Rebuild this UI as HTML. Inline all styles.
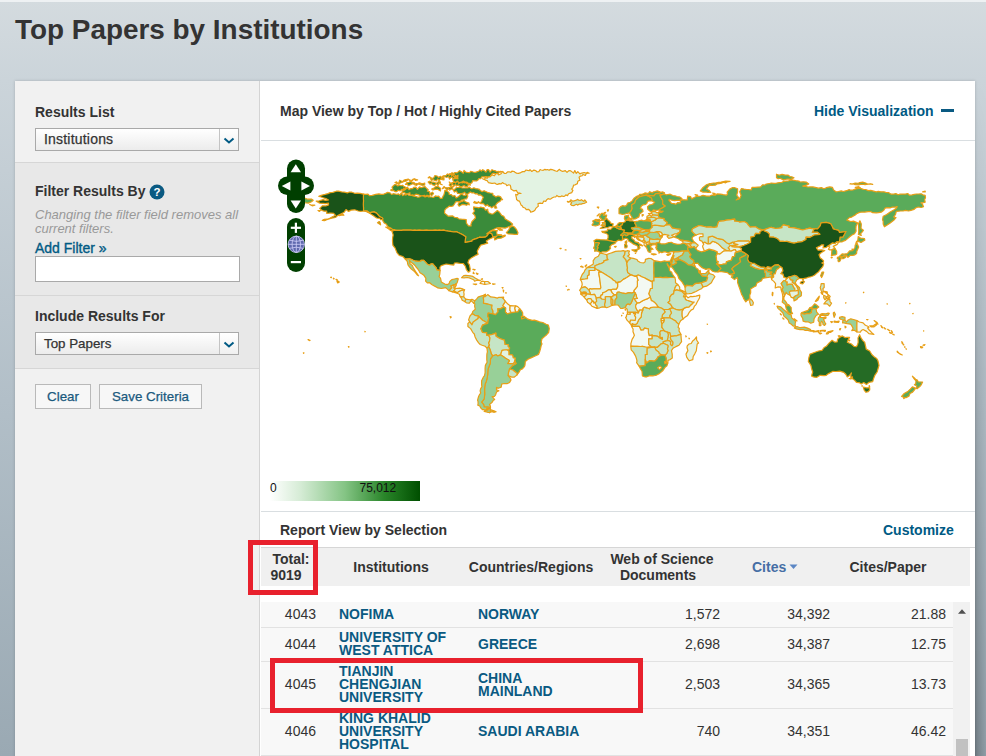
<!DOCTYPE html>
<html><head><meta charset="utf-8">
<style>
*{box-sizing:border-box;margin:0;padding:0}
html,body{width:986px;height:756px;overflow:hidden}
body{font-family:"Liberation Sans",sans-serif;color:#333;background:#cdd5da;position:relative;font-size:14px}
.bg{position:absolute;left:0;top:0;width:986px;height:756px;background:linear-gradient(to bottom,#d4dbdf 0,#cbd4da 80px,#b2bfc8 400px,#9aa9b3 756px)}
.shadow{position:absolute;left:15px;top:81px;width:960px;height:700px;box-shadow:0 0 3px rgba(0,0,0,0.18)}
.rshadow{position:absolute;left:975px;top:81px;width:11px;height:675px;background:linear-gradient(to right,rgba(0,0,0,0.27),rgba(0,0,0,0.07));-webkit-mask-image:linear-gradient(to bottom,rgba(0,0,0,0) 0,rgba(0,0,0,1) 100%);mask-image:linear-gradient(to bottom,rgba(0,0,0,0) 0,rgba(0,0,0,1) 100%)}
.topline{position:absolute;left:0;top:0;width:986px;height:2px;background:#eef1f3}
.abs{position:absolute;white-space:nowrap}
h1{position:absolute;left:15px;top:12.5px;font-size:27.9px;font-weight:bold;color:#333;line-height:34px;white-space:nowrap}
.left{position:absolute;left:15px;top:81px;width:245px;height:675px;background:#f1f1f1;border-right:1px solid #d4d4d4}
.sec2{position:absolute;left:0;top:81px;width:244px;height:207px;background:#e8e8e8;border-top:1px solid #d6d6d6;border-bottom:1px solid #d6d6d6}
.sepl{position:absolute;left:0;width:244px;height:1px;background:#d6d6d6}
.lbl{position:absolute;left:20px;font-weight:bold;font-size:14px;color:#333;white-space:nowrap;line-height:16px}
.sel{position:absolute;left:20px;width:204px;height:23px;border:1px solid #a9a9a9;background:linear-gradient(#fff,#ececec);font-size:13.33px;line-height:21px;padding-left:8px;color:#333;-webkit-text-stroke:0.25px #333}
.sel .arr{position:absolute;right:0;top:0;width:19px;height:21px;border-left:1px solid #c4c4c4;background:linear-gradient(#fff,#f0f0f0)}
.main{position:absolute;left:260px;top:81px;width:715px;height:675px;background:#fff;border-left:1px solid #fff}
.hline{position:absolute;left:0;width:714px;height:1px;background:#d9dee1}
.b{font-weight:bold}
.blue{color:#005a84}
.btn{position:absolute;top:303px;height:25px;border:1px solid #b9b9b9;background:#f7f7f7;color:#1b5a7e;font-size:13.33px;line-height:23px;text-align:center;-webkit-text-stroke:0.25px #1b5a7e}
.th{position:absolute;font-weight:bold;font-size:14px;line-height:16px;text-align:center;white-space:nowrap;color:#333}
.row{position:absolute;left:0;width:692px;background:#f8f8f8;border-bottom:1px solid #e2e2e2}
.c{position:absolute;white-space:nowrap;font-size:14px;line-height:13px}
.lnk{font-weight:bold;color:#0a5a82}
.num{text-align:right;color:#333;font-size:14px}
.red{position:absolute;border:5px solid #e8212d}
</style></head><body>
<div class="bg"></div><div class="topline"></div>
<div class="shadow"></div><div class="rshadow"></div>
<h1>Top Papers by Institutions</h1>
<div class="left">
  <div class="lbl" style="top:23px">Results List</div>
  <div class="sel" style="top:47px;font-size:14px;letter-spacing:0.2px">Institutions<div class="arr"><svg width="18" height="21" viewBox="0 0 18 21"><path d="M4.5 9.5 L9 13.5 L13.5 9.5" fill="none" stroke="#005a84" stroke-width="2"/></svg></div></div>
  <div class="sec2">
    <div class="lbl" style="top:20px">Filter Results By</div>
    <svg class="abs" style="left:134px;top:21px" width="16" height="16" viewBox="0 0 16 16"><circle cx="8" cy="8" r="7.5" fill="#0a5a82"/><text x="8" y="12" font-family="Liberation Sans" font-size="11.5" font-weight="bold" fill="#fff" text-anchor="middle">?</text></svg>
    <div class="abs" style="left:20px;top:45px;font-style:italic;font-size:13px;line-height:14px;color:#999;white-space:normal;width:215px">Changing the filter field removes all current filters.</div>
    <div class="abs blue" style="left:20px;top:77px;font-size:14px;line-height:16px;-webkit-text-stroke:0.35px #005a84">Add Filter »</div>
    <div class="abs" style="left:20px;top:93px;width:205px;height:26px;background:#fff;border:1px solid #a9a9a9"></div>
    <div class="sepl" style="top:132px"></div>
    <div class="lbl" style="top:145px">Include Results For</div>
    <div class="sel" style="top:169px">Top Papers<div class="arr"><svg width="18" height="21" viewBox="0 0 18 21"><path d="M4.5 9.5 L9 13.5 L13.5 9.5" fill="none" stroke="#005a84" stroke-width="2"/></svg></div></div>
  </div>
  <div class="btn" style="left:20px;width:56px">Clear</div>
  <div class="btn" style="left:84px;width:103px">Save Criteria</div>
</div>
<div class="main">
  <div class="abs b" style="left:19px;top:22px;font-size:14px;line-height:16px">Map View by Top / Hot / Highly Cited Papers</div>
  <div class="abs b blue" style="left:553px;top:22px;font-size:14px;line-height:16px">Hide Visualization</div>
  <div class="abs" style="left:680px;top:27.5px;width:13px;height:3.5px;background:#0a5a82"></div>
  <div class="hline" style="top:59px"></div>
  <svg class="abs" style="left:0;top:60px" width="713" height="370" viewBox="0 0 713 370"><g stroke="#e89f16" stroke-width="1.2" stroke-linejoin="round">
<path d="M102.5,53.2 104.7,53.3 107.0,53.2 108.4,54.6 111.2,54.4 114.7,53.4 117.9,52.9 120.2,53.4 122.5,53.3 125.2,52.1 126.8,51.3 129.3,52.0 130.5,53.5 132.2,52.7 134.2,53.0 135.9,53.4 137.5,52.9 138.8,54.1 140.3,51.8 141.6,54.6 143.7,53.4 145.0,54.1 146.6,53.1 148.0,54.4 150.3,54.1 151.4,54.7 153.2,55.2 155.5,55.5 156.7,56.2 158.5,55.9 160.2,55.0 162.1,54.7 164.1,56.0 165.5,55.5 166.9,54.6 168.5,55.8 170.7,56.0 172.5,56.5 174.4,54.9 176.0,55.4 177.7,55.1 179.4,57.3 181.2,57.2 182.1,55.1 183.0,53.6 183.2,52.6 183.7,50.7 183.8,49.4 186.3,50.2 188.0,51.4 188.2,53.4 190.4,53.6 191.7,55.1 193.8,54.5 195.2,56.9 196.8,56.0 198.2,55.0 199.6,53.4 200.7,52.7 202.3,54.1 204.3,54.4 205.7,53.0 206.9,55.1 205.7,57.8 203.8,58.0 201.7,58.9 200.5,59.0 199.3,60.7 197.0,60.7 194.7,60.8 193.5,63.0 192.1,64.9 190.1,65.5 188.2,65.1 186.4,66.8 185.4,67.1 183.8,69.1 183.5,72.1 185.6,73.8 187.3,75.2 191.7,74.9 193.5,76.3 196.4,76.7 197.9,77.9 200.5,78.2 202.9,78.3 205.2,78.6 205.4,82.2 207.5,84.9 210.1,84.9 209.9,83.2 211.0,80.5 213.1,78.3 214.5,77.0 213.9,74.4 211.8,72.3 213.6,70.0 212.5,67.9 212.7,65.8 214.7,66.3 215.9,66.4 217.9,66.8 219.7,66.0 221.4,66.6 222.9,66.5 224.5,69.1 226.7,68.2 226.9,70.0 227.6,71.8 230.3,72.9 232.0,73.0 234.6,70.9 236.3,69.5 238.3,71.0 240.7,74.4 242.8,75.3 244.2,77.9 246.8,79.6 248.6,80.5 251.7,83.1 249.5,85.1 247.6,85.8 244.2,87.1 241.1,86.8 238.0,86.6 235.5,87.0 232.0,88.7 228.5,90.6 225.8,92.8 227.6,91.7 230.3,90.2 232.0,89.4 236.3,89.6 235.5,91.4 236.3,94.1 238.6,93.9 241.6,94.9 244.2,94.1 244.2,94.9 242.5,95.9 239.9,97.2 237.2,97.3 233.7,98.9 233.4,97.1 235.8,95.2 232.0,96.1 230.6,92.6 228.1,92.0 226.2,94.7 224.1,96.2 220.5,96.3 218.5,96.2 215.3,97.6 212.9,98.4 211.0,99.2 211.0,100.1 209.3,100.4 206.0,101.1 204.0,101.5 204.3,98.8 204.8,95.7 201.3,93.6 199.7,92.7 197.1,91.5 195.2,90.6 192.6,91.0 189.4,90.4 187.3,90.1 184.5,89.6 182.7,89.2 180.1,89.3 178.4,89.1 176.5,89.3 174.3,89.2 171.8,89.3 169.7,89.3 167.5,89.3 165.4,89.2 162.4,89.3 160.9,89.3 158.3,89.2 155.5,89.4 153.8,89.2 151.9,89.3 149.7,89.2 147.4,89.2 144.7,89.2 142.3,89.2 140.3,89.3 138.7,89.3 136.1,89.3 134.0,89.2 133.6,88.7 131.4,88.3 129.7,87.1 127.0,85.8 125.2,83.1 123.2,81.9 121.7,79.6 121.7,77.2 118.2,75.2 115.6,72.1 113.0,70.9 110.2,71.4 108.6,71.8 106.0,70.0 102.5,69.5 102.5,66.8 102.4,65.2 102.3,63.2 102.5,59.9 102.4,57.5 102.4,55.7ZM124.7,86.1 128.3,87.3 130.5,87.5 133.2,90.3 129.6,89.4 127.8,88.1ZM245.4,91.7 247.3,92.9 251.2,93.1 253.8,93.3 256.5,93.4 257.0,91.7 255.6,88.7 253.4,86.0 251.6,84.9 248.9,86.6 247.7,88.9ZM235.8,66.9 234.0,67.2 233.2,64.9 230.7,66.8 229.3,65.6 228.1,65.5 226.2,63.8 224.7,65.1 223.2,63.4 222.1,62.4 219.9,62.6 218.8,62.1 217.5,60.7 215.9,62.5 214.4,62.1 212.7,61.6 213.6,60.4 215.3,61.4 217.2,61.4 219.0,61.9 220.6,60.4 221.5,57.8 222.3,56.4 221.0,54.9 219.3,53.8 217.5,54.1 216.1,52.7 214.5,52.9 212.7,51.7 211.0,52.0 209.4,50.9 207.7,52.2 206.8,53.0 204.9,53.6 203.7,51.2 202.4,52.2 200.5,52.5 198.3,52.5 196.6,52.4 195.3,50.0 193.5,51.1 192.1,49.0 193.8,48.3 194.4,47.2 195.9,46.5 197.7,46.3 199.6,45.8 201.2,47.0 203.6,47.0 204.9,47.0 206.9,46.9 208.3,46.0 209.7,47.3 210.9,47.8 212.9,46.8 214.5,47.6 216.5,47.8 218.5,48.4 219.3,49.6 220.9,50.6 223.2,49.7 224.3,50.4 225.8,51.0 227.2,51.7 229.3,52.0 231.8,52.3 232.0,54.2 233.6,54.9 235.0,56.0 236.5,55.1 238.2,55.2 239.6,55.9 240.7,57.8 241.6,58.6 240.0,58.8 239.0,60.4 237.2,61.2 235.3,63.0 234.6,64.4ZM141.0,49.9 141.7,52.0 143.6,51.5 144.5,52.7 146.5,52.8 148.9,51.7 149.1,54.3 151.5,53.9 152.9,54.4 154.9,53.2 156.9,53.6 158.5,54.2 160.2,54.8 161.6,54.9 163.5,54.3 164.7,55.4 166.0,54.2 167.3,56.0 169.4,53.3 170.7,54.6 172.5,52.5 171.5,51.2 169.0,52.8 168.4,50.5 166.3,50.2 167.2,48.8 165.5,47.2 164.1,45.7 161.5,46.2 160.2,46.7 158.5,45.9 156.4,48.4 154.9,46.2 152.9,46.3 151.5,47.6 150.0,47.5 148.0,48.6 146.4,46.2 144.4,48.5 142.7,47.2 142.7,48.9ZM129.6,49.0 130.7,49.7 132.7,49.6 134.0,50.6 135.7,50.6 137.5,49.3 139.2,49.9 141.0,48.3 142.8,49.9 144.7,47.2 146.2,47.2 144.6,46.3 142.7,45.2 141.5,44.2 140.1,44.8 138.5,44.0 136.8,45.0 135.1,43.6 133.6,43.6 132.2,45.0 131.0,46.2 131.8,48.1ZM211.0,41.7 209.3,42.7 207.9,42.5 205.9,42.7 204.2,40.9 203.2,40.8 201.9,41.8 199.5,41.5 197.7,42.6 196.9,40.1 194.6,41.8 193.5,41.1 192.3,40.0 191.7,38.5 192.9,37.9 193.6,36.3 196.6,37.0 197.0,35.0 195.1,35.8 192.6,35.4 191.8,34.1 190.4,32.5 188.2,32.9 189.9,33.3 191.0,31.7 193.0,32.6 193.9,31.5 196.0,31.9 197.5,30.6 198.6,29.7 200.5,30.8 202.3,32.2 203.0,29.4 204.6,31.0 206.4,31.3 208.5,31.6 209.9,30.3 211.0,30.7 212.3,31.0 214.3,31.4 215.2,31.1 217.6,30.3 218.9,28.8 220.4,30.1 221.7,28.7 223.2,29.6 224.9,31.1 226.2,28.6 227.7,28.7 229.1,31.2 231.0,28.7 232.3,29.3 234.4,29.8 236.1,31.0 237.2,30.3 239.2,31.2 240.7,30.6 239.0,30.3 237.2,32.4 235.9,34.0 233.1,32.2 231.3,32.6 230.2,34.1 229.1,35.7 227.4,36.2 224.9,35.6 223.2,35.9 220.7,35.9 219.9,37.6 218.0,37.6 217.2,38.7 215.8,39.9 213.2,39.8 211.7,39.6ZM209.2,44.3 207.6,43.0 206.6,45.5 204.2,45.6 203.5,44.6 201.4,45.3 200.5,45.7 199.0,45.2 197.0,44.1 195.3,45.1 194.6,43.2 192.8,45.5 191.5,42.7 189.7,45.6 188.2,44.1 189.2,42.1 188.2,41.0 189.9,42.4 191.3,41.6 192.8,41.5 194.5,41.5 196.0,40.2 197.5,41.7 198.9,41.6 200.5,41.1 202.6,40.1 203.7,42.0 205.6,41.0 207.1,42.0 209.2,42.5ZM197.0,38.0 195.6,37.4 193.4,37.7 191.9,37.5 190.5,35.9 188.5,38.0 187.7,35.7 185.7,36.3 184.6,36.0 183.1,35.5 181.2,35.9 182.1,34.9 184.0,34.6 185.3,34.2 186.5,32.9 188.2,34.2 189.8,32.7 190.6,34.6 192.6,33.1 193.7,33.9 195.5,35.3 197.0,34.1 196.7,36.1ZM163.7,44.1 161.9,44.2 161.0,44.3 159.1,43.6 156.9,42.9 155.7,44.3 154.0,43.9 152.2,42.7 150.5,43.2 149.7,43.7 147.2,44.7 146.4,43.1 144.5,43.4 145.9,41.6 148.0,41.3 149.3,40.8 150.7,41.1 153.1,41.6 154.5,42.9 155.6,42.5 157.1,42.4 158.5,41.9 160.4,42.6 161.6,42.7 163.7,42.0ZM191.7,48.1 189.9,48.0 188.6,49.2 187.6,47.6 186.0,49.4 183.9,46.5 182.4,47.3 181.2,47.8 183.0,45.5 184.3,46.6 186.8,46.8 187.8,46.6 189.8,46.3 191.7,45.5ZM179.5,49.9 177.4,48.7 176.6,48.2 173.8,48.4 171.9,48.9 170.7,48.1 173.0,47.0 174.2,45.8 176.6,45.3 177.7,45.9 179.5,47.2ZM208.3,63.9 207.0,63.2 205.5,64.3 203.5,63.6 201.9,63.4 200.3,63.9 198.1,65.2 197.0,63.7 197.7,62.1 199.2,61.2 199.6,60.0 200.8,60.7 203.0,59.4 204.5,60.7 205.7,61.2 207.9,62.1ZM181.2,43.8 179.5,43.1 178.1,42.1 177.0,44.4 175.3,42.7 173.8,44.3 171.7,43.9 170.2,42.4 169.0,43.2 167.2,41.0 168.5,40.2 170.7,40.9 171.8,41.2 173.1,41.2 175.3,42.2 176.1,41.7 178.0,40.3 179.5,41.1 179.1,42.9ZM156.7,38.8 155.3,38.6 153.3,37.8 152.0,38.2 150.6,40.2 149.1,39.3 147.3,38.2 146.2,39.4 144.9,40.1 143.0,40.4 140.8,41.5 139.2,42.0 137.1,43.3 135.6,40.8 134.0,41.5 135.8,42.5 137.9,41.8 138.7,39.2 141.6,40.7 142.7,39.4 144.5,38.6 145.2,38.5 147.2,38.0 148.5,39.7 150.0,39.3 151.6,39.3 153.2,37.6 154.4,39.3ZM183.0,38.8 181.3,38.6 179.7,37.9 178.1,39.9 176.7,38.0 175.4,40.0 173.8,39.5 172.5,38.7 170.2,39.3 169.1,36.4 167.2,36.8 168.5,35.7 171.2,37.5 172.8,36.7 173.9,34.5 176.0,35.0 177.5,36.4 179.6,35.3 180.8,37.1 183.0,36.8ZM241.6,89.1 238.8,89.2 236.5,87.7 239.8,88.2ZM118.2,80.5 116.5,81.7 119.6,83.8 119.1,81.4ZM236.7,93.6 240.7,93.8 239.0,94.5Z" fill="#3a8b3a"/>
<path d="M131.0,90.3 132.2,94.0 131.6,96.8 131.5,99.8 131.6,101.5 131.9,104.3 134.0,106.9 134.8,108.9 135.9,111.6 138.2,114.4 141.8,115.5 144.3,118.1 148.5,117.8 150.1,118.3 152.2,119.3 155.0,120.2 157.1,120.3 159.9,120.2 159.9,119.4 162.8,119.4 164.9,121.6 166.3,123.2 168.6,124.2 170.0,122.9 171.8,122.9 173.0,124.3 175.1,126.7 175.8,128.8 179.1,129.7 178.9,126.4 180.2,124.6 183.0,123.7 185.1,123.0 189.1,123.7 192.8,124.1 193.5,122.0 195.9,121.9 199.6,122.5 202.2,122.5 204.3,125.1 205.4,128.6 207.3,131.1 208.9,130.4 209.2,127.8 208.4,123.8 206.9,121.6 207.8,119.0 211.0,116.4 214.5,114.4 217.1,113.4 216.2,110.2 217.6,107.6 219.7,104.1 223.2,103.2 226.7,102.2 225.3,100.1 228.5,98.0 232.0,96.4 232.0,96.1 230.6,92.6 228.1,92.0 226.2,94.7 224.1,96.2 220.5,96.3 218.5,96.2 215.3,97.6 212.9,98.4 211.0,99.2 211.0,100.1 209.3,100.4 206.0,101.1 204.0,101.5 204.3,98.8 204.8,95.7 201.3,93.6 199.7,92.7 197.1,91.5 195.2,90.6 192.6,91.0 189.4,90.4 187.3,90.1 184.5,89.6 182.7,89.2 180.1,89.3 178.4,89.1 176.5,89.3 174.3,89.2 171.8,89.3 169.7,89.3 167.5,89.3 165.4,89.2 162.4,89.3 160.9,89.3 158.3,89.2 155.5,89.4 153.8,89.2 151.9,89.3 149.7,89.2 147.4,89.2 144.7,89.2 142.3,89.2 140.3,89.3 138.7,89.3 136.1,89.3 134.0,89.2ZM102.5,53.2 99.1,52.3 96.3,52.1 93.7,52.3 90.9,51.2 88.4,51.0 86.5,51.9 83.2,51.1 80.7,50.9 77.5,50.2 75.3,50.2 71.8,51.4 69.2,51.6 67.0,52.6 64.0,53.4 60.2,54.3 57.8,55.3 59.5,55.7 62.2,56.7 65.7,57.9 67.5,59.0 64.5,59.4 62.2,58.6 59.7,59.3 58.3,59.9 55.2,60.2 58.7,62.1 62.2,62.4 64.3,62.7 67.5,62.1 67.5,63.9 64.8,64.9 61.3,64.8 58.7,67.4 60.5,69.1 63.1,70.2 65.7,70.2 65.7,72.3 68.0,72.2 69.9,72.0 72.7,72.4 74.5,74.4 71.5,75.7 69.2,77.0 66.7,78.2 63.1,78.4 61.3,79.4 63.5,79.7 65.7,78.8 68.8,77.6 71.8,77.0 74.5,76.5 76.2,74.9 79.7,73.0 83.2,71.2 85.0,68.6 87.6,70.4 90.2,69.1 93.7,68.8 97.2,70.0 99.7,70.3 102.5,70.0 105.1,70.5 108.6,72.3 112.1,74.4 115.6,77.0 118.5,77.3 120.0,78.8 121.7,78.2 121.7,77.2 118.2,75.2 115.6,72.1 113.0,70.9 110.2,71.4 108.6,71.8 106.0,70.0 102.5,69.5 102.5,66.8 102.4,65.2 102.3,63.2 102.5,59.9 102.4,57.5 102.4,55.7ZM78.3,74.7 81.0,73.9 82.9,74.2 81.5,73.0ZM48.7,63.5 50.8,64.2 53.8,64.2 51.2,64.8ZM57.0,69.6 59.4,69.5 58.4,70.4ZM76.2,139.6 78.3,140.9 76.7,141.9 76.0,140.5ZM72.4,137.2 73.2,137.7 72.5,137.8ZM75.0,138.4 76.2,138.6 75.5,138.9ZM69.6,136.3 70.4,136.1 70.3,136.7Z" fill="#1a5319"/>
<path d="M144.3,118.1 148.5,117.8 150.1,118.3 152.2,119.3 155.0,120.2 157.1,120.3 159.9,120.2 159.9,119.4 162.8,119.4 164.9,121.6 166.3,123.2 168.6,124.2 170.0,122.9 171.8,122.9 173.0,124.3 175.1,126.7 175.8,128.8 179.1,129.7 178.8,133.1 178.1,135.6 179.5,137.2 180.3,140.9 183.8,143.1 186.5,143.6 188.2,142.4 188.8,140.4 190.8,138.6 193.5,138.0 196.1,137.4 197.3,137.9 196.1,141.8 194.9,143.7 193.1,143.9 190.0,144.9 190.8,146.8 187.9,149.6 184.7,146.6 182.1,147.1 180.3,147.5 176.8,146.9 174.6,145.6 170.7,143.5 168.7,141.7 166.3,141.8 164.6,140.0 164.9,137.4 162.8,134.2 161.1,133.1 159.0,131.7 157.8,129.5 156.7,127.8 155.0,126.0 154.0,124.5 151.8,122.5 150.3,121.5 148.5,119.5 148.8,122.5 151.4,124.6 152.3,126.9 153.4,128.6 155.0,131.2 157.6,134.8 156.2,133.9 154.4,131.6 153.2,130.4 150.4,128.1 148.8,126.4 147.1,124.1 146.6,122.5 146.4,120.5Z" fill="#98d098"/>
<path d="M187.9,149.6 190.8,146.8 190.0,144.9 193.1,143.9 193.1,147.2 194.7,147.5 192.9,149.8 191.5,150.9Z" fill="#c6e5c6"/>
<path d="M193.1,143.9 194.9,143.7 194.7,142.6 195.2,144.4 193.6,147.2 193.1,147.2Z" fill="#e3f3e3"/>
<path d="M194.7,147.5 198.7,147.2 200.8,147.6 203.6,148.8 200.8,149.3 197.3,150.9 196.2,152.2 195.6,151.6 192.9,149.8Z" fill="#e3f3e3"/>
<path d="M191.5,150.9 192.9,149.8 195.6,151.6 195.2,151.9Z" fill="#e3f3e3"/>
<path d="M203.6,148.8 202.7,151.0 203.1,153.1 202.7,155.9 199.2,155.6 198.3,153.3 196.2,152.2 197.3,150.9 200.8,149.3Z" fill="#e3f3e3"/>
<path d="M202.7,155.9 204.7,158.2 204.1,160.8 201.2,159.3 200.5,157.5 199.2,155.6Z" fill="#c6e5c6"/>
<path d="M204.7,158.2 207.5,158.5 209.2,158.9 211.0,158.4 213.8,159.8 212.9,162.4 210.1,159.6 208.3,162.2 205.5,161.9 204.1,160.8Z" fill="#c6e5c6"/>
<path d="M200.6,136.7 202.7,134.6 204.8,134.4 209.2,134.8 211.9,135.4 214.5,137.2 217.3,138.7 219.4,139.6 215.9,139.2 213.6,140.2 212.7,138.8 209.0,137.2 206.6,136.5 203.0,136.8Z" fill="#c6e5c6"/>
<path d="M219.0,142.4 220.8,140.2 223.7,140.5 223.7,143.5 221.8,143.0Z" fill="#f3f9f3"/>
<path d="M223.7,140.5 226.9,140.5 229.5,142.4 226.7,143.0 223.7,143.5Z" fill="#e3f3e3"/>
<path d="M212.2,143.0 215.7,143.1 214.6,143.7Z" fill="#e3f3e3"/>
<path d="M231.6,142.8 234.2,143.0 232.0,143.5Z" fill="#c6e5c6"/>
<path d="M211.8,128.3 214.1,128.6 213.1,129.1ZM212.4,131.2 213.2,132.6 212.2,132.5ZM215.3,132.1 217.1,132.8 216.2,133.4ZM220.2,138.1 221.5,137.7 221.1,138.4Z" fill="#f3f9f3"/>
<path d="M240.9,156.3 242.6,156.1 242.5,157.3 240.9,157.3Z" fill="#e3f3e3"/>
<path d="M241.1,146.5 242.1,146.5 241.6,147.2ZM242.1,149.1 242.8,149.3 242.5,149.8ZM242.3,150.7 242.6,150.5 242.6,151.0ZM244.7,151.7 245.3,151.9 244.9,152.2Z" fill="#f3f9f3"/>
<path d="M213.8,159.8 215.7,157.9 217.1,156.1 218.3,155.6 222.3,154.4 224.4,153.3 223.4,154.7 222.3,156.6 222.7,159.1 222.5,162.1 226.5,162.8 228.5,163.5 231.1,164.1 230.6,167.1 232.0,170.1 232.0,172.9 229.7,172.5 227.1,172.0 226.7,175.4 227.8,176.9 227.2,179.4 226.7,182.4 225.5,181.6 223.9,180.6 221.6,179.2 219.6,177.3 217.4,175.2 213.8,174.3 211.1,172.6 211.8,170.4 214.3,168.2 213.6,165.2 213.9,162.8 212.9,162.4Z" fill="#98d098"/>
<path d="M224.4,153.3 223.9,155.9 226.7,153.6 229.7,155.9 233.7,156.4 236.3,157.1 237.9,156.3 240.7,156.3 242.5,157.9 244.2,160.1 244.2,161.0 243.1,162.6 241.8,164.7 243.0,165.9 239.3,167.8 236.7,167.8 237.2,170.6 234.6,173.6 232.0,172.9 232.0,170.1 230.6,167.1 231.1,164.1 228.5,163.5 226.5,162.8 222.5,162.1 222.7,159.1 222.3,156.6 223.4,154.7Z" fill="#c6e5c6"/>
<path d="M244.2,160.1 246.8,163.1 249.1,164.7 248.9,169.1 250.3,171.7 246.3,172.9 244.4,171.0 244.6,167.1 243.0,165.9 241.8,164.7 243.1,162.6 244.2,161.0Z" fill="#f3f9f3"/>
<path d="M249.1,164.7 252.7,164.9 254.7,164.9 253.8,167.1 254.7,171.0 252.8,171.3 250.3,171.7 248.9,169.1Z" fill="#f3f9f3"/>
<path d="M254.7,164.9 256.7,165.6 258.7,167.6 256.8,171.0 254.7,171.0 253.8,167.1Z" fill="#f3f9f3"/>
<path d="M211.1,172.6 213.8,174.3 217.4,175.2 217.1,177.6 214.0,179.8 212.2,180.9 211.0,183.8 208.7,180.9 207.6,178.9 209.0,175.0Z" fill="#c6e5c6"/>
<path d="M208.7,180.9 211.0,183.8 212.2,180.9 214.0,179.8 217.1,177.6 217.4,175.2 219.6,177.3 221.6,179.2 223.9,180.6 225.5,181.6 226.7,182.4 224.1,183.1 221.6,184.1 219.9,187.8 221.6,191.4 225.7,191.6 225.7,194.2 227.6,194.2 229.0,196.9 228.5,200.4 227.6,202.1 228.5,203.9 227.6,205.6 226.0,207.1 224.1,205.3 221.2,204.3 219.2,203.5 217.6,201.8 215.7,199.1 214.1,196.0 213.3,193.0 211.7,191.3 209.6,187.6 206.9,185.5 206.9,182.5Z" fill="#c6e5c6"/>
<path d="M258.7,167.6 260.6,169.9 261.7,171.9 261.7,175.0 264.3,176.2 266.9,178.2 268.5,178.6 271.3,179.4 273.4,179.2 276.6,180.1 278.4,180.8 281.8,181.5 285.1,183.3 287.4,184.1 288.3,187.6 287.6,191.6 285.7,193.7 284.1,195.1 281.0,197.8 280.2,201.0 281.0,203.0 280.2,204.6 279.6,207.4 278.7,210.5 277.5,213.5 273.6,215.2 270.5,216.6 267.0,218.2 264.3,220.5 264.0,224.0 263.4,225.7 261.4,227.9 259.4,228.6 257.9,231.4 255.8,234.1 256.1,232.2 253.7,230.5 251.9,229.0 248.4,227.9 251.4,224.7 255.1,222.5 253.7,219.8 254.2,217.0 252.2,217.0 251.6,214.0 247.9,213.7 247.9,210.4 247.4,209.6 248.6,206.9 247.0,205.3 247.2,203.5 243.9,203.5 243.7,201.6 243.3,199.1 239.3,197.8 236.6,196.2 234.8,195.1 234.9,192.1 232.8,192.9 230.2,193.7 227.6,194.2 225.7,194.2 225.7,191.6 221.6,191.4 219.9,187.8 221.6,184.1 224.1,183.1 226.7,182.4 227.2,179.4 227.8,176.9 226.7,175.4 227.1,172.0 229.7,172.5 232.0,172.9 234.6,173.6 237.2,170.6 236.7,167.8 239.3,167.8 243.0,165.9 244.6,167.1 244.4,171.0 246.3,172.9 250.3,171.7 252.8,171.3 254.7,171.0 256.8,171.0ZM260.3,175.4 263.5,175.4 264.2,176.8 260.8,178.0Z" fill="#5aab5a"/>
<path d="M227.6,194.2 230.2,193.7 232.8,192.9 234.9,192.1 234.8,195.1 236.6,196.2 239.3,197.8 243.3,199.1 243.7,201.6 243.9,203.5 247.2,203.5 247.0,205.3 248.6,206.9 247.4,209.6 245.8,208.8 243.6,209.0 241.1,209.3 240.3,211.6 239.7,213.9 236.7,214.9 235.1,213.7 231.6,214.9 230.2,212.6 229.3,209.1 227.6,205.6 228.5,203.9 227.6,202.1 228.5,200.4 229.0,196.9Z" fill="#c6e5c6"/>
<path d="M239.7,213.9 240.3,211.6 241.1,209.3 243.6,209.0 245.8,208.8 247.4,209.6 247.9,210.4 247.9,213.7 251.6,214.0 252.2,217.0 254.2,217.0 253.7,219.8 253.3,221.7 251.4,222.9 248.9,222.7 246.7,222.6 248.4,219.6 245.9,218.1 244.2,217.0 242.2,215.5Z" fill="#e3f3e3"/>
<path d="M248.4,227.9 251.9,229.0 253.7,230.5 256.1,232.2 255.8,234.1 253.1,236.2 250.9,236.1 247.0,234.5 247.4,231.9Z" fill="#c6e5c6"/>
<path d="M231.6,214.9 235.1,213.7 236.7,214.9 239.7,213.9 242.2,215.5 244.2,217.0 245.9,218.1 248.4,219.6 246.7,222.6 248.9,222.7 251.4,222.9 253.3,221.7 253.7,219.8 255.1,222.5 251.4,224.7 248.4,227.9 247.4,231.9 247.0,234.5 249.1,236.8 250.0,238.9 248.6,241.5 246.0,242.7 243.1,242.5 240.7,243.1 240.2,246.1 237.3,247.3 235.5,246.4 235.5,248.9 237.9,249.7 235.5,251.1 234.6,253.8 233.4,255.5 231.1,255.5 232.7,257.4 233.7,258.6 232.1,259.6 230.9,261.6 228.5,263.4 229.4,265.1 229.5,266.5 226.7,266.2 223.2,266.0 222.7,263.7 220.6,261.1 223.2,257.8 223.5,255.0 223.7,253.4 223.6,251.4 223.6,248.5 223.7,246.3 224.1,243.2 225.2,240.5 225.8,238.5 226.3,235.9 226.7,233.3 226.8,230.7 227.1,227.9 228.5,224.3 229.3,222.2 229.5,217.9ZM229.2,267.2 230.0,268.9 232.2,269.6 233.0,269.9 235.1,270.7 232.8,271.3 231.1,270.6 229.2,271.1Z" fill="#98d098"/>
<path d="M226.0,207.1 227.6,205.6 229.3,209.1 230.2,212.6 231.6,214.9 229.5,217.9 229.3,222.2 228.5,224.3 227.1,227.9 226.8,230.7 226.7,233.3 226.3,235.9 225.8,238.5 225.2,240.5 224.1,243.2 223.7,246.3 223.6,248.5 223.6,251.4 223.7,253.4 223.5,255.0 223.2,257.8 220.6,261.1 222.7,263.7 223.2,266.0 226.7,266.2 229.5,266.5 228.1,266.8 227.0,269.1 225.0,269.1 222.6,268.6 221.4,268.6 219.7,266.9 218.8,265.0 216.8,264.2 217.1,262.5 217.0,260.4 216.6,259.2 217.1,257.2 217.7,255.3 218.7,253.3 219.7,252.0 219.1,249.8 219.7,247.6 221.0,245.5 220.6,244.1 220.6,239.8 222.3,236.2 223.4,234.8 224.1,231.9 224.1,227.5 224.3,224.7 225.0,223.1 226.1,221.4 225.8,218.8 225.8,215.2 225.9,213.0 226.4,210.9ZM229.2,267.2 227.3,268.1 225.8,267.4 225.0,269.5 223.2,270.4 225.3,270.9 227.1,271.3 228.5,271.8 229.2,271.1Z" fill="#98d098"/>
<path d="M189.1,175.5 190.3,176.1 189.6,176.8Z" fill="#f3f9f3"/>
<path d="M221.5,37.8 223.8,38.5 224.0,36.4 226.0,37.3 227.3,35.9 229.0,35.8 230.2,34.7 231.1,33.9 233.5,34.8 234.8,32.6 236.4,32.4 237.6,33.9 239.7,33.0 240.7,31.8 241.7,30.4 243.4,32.5 245.1,32.3 246.8,30.8 248.2,30.8 249.9,31.4 250.9,30.1 253.1,30.5 254.0,31.3 255.5,32.1 257.4,32.4 259.2,31.9 260.6,31.1 261.7,30.6 263.6,30.7 264.8,29.0 266.6,29.4 268.3,29.6 269.0,28.7 270.8,30.5 272.9,29.1 274.6,29.5 275.9,30.9 277.8,30.7 279.1,28.5 280.1,29.0 282.2,29.3 283.9,28.4 285.0,28.9 286.4,28.5 288.1,29.3 289.5,28.3 291.5,28.7 293.2,29.4 294.7,30.0 296.2,30.3 298.5,28.3 299.2,29.2 301.1,30.3 302.9,30.2 304.1,29.5 306.0,31.4 307.7,29.8 308.9,29.6 310.7,30.6 312.6,32.1 313.8,29.6 315.3,32.4 316.8,30.6 318.9,32.9 319.7,32.4 322.0,31.8 323.2,31.5 325.5,32.3 326.8,32.2 328.2,32.2 326.2,31.4 325.3,32.5 324.3,34.4 321.9,33.5 320.9,35.0 319.5,35.0 318.1,36.3 318.9,39.1 316.8,40.2 316.4,42.6 314.2,43.8 312.6,44.2 311.8,46.8 310.7,48.1 311.9,49.5 310.7,51.6 309.3,52.1 307.6,52.7 306.5,54.6 304.8,53.9 303.7,55.1 302.4,55.5 300.7,54.9 299.3,55.7 297.7,55.7 295.8,54.5 294.7,56.0 293.2,56.0 291.3,56.8 290.5,57.5 289.0,58.3 287.1,57.6 285.8,58.7 284.7,60.4 282.7,60.0 281.5,62.5 279.2,62.1 277.0,62.6 277.3,65.2 276.2,66.1 274.8,67.4 273.9,69.2 272.2,70.4 269.7,71.2 269.1,69.8 267.5,68.3 265.2,68.6 264.4,67.3 262.0,66.3 261.4,64.9 260.0,63.9 259.2,61.9 258.5,60.2 257.3,59.9 255.6,58.6 255.4,56.7 254.9,54.9 254.7,53.4 256.4,54.0 257.8,51.9 260.0,52.5 257.7,52.3 256.6,51.8 255.4,49.4 253.0,49.9 251.1,48.8 249.9,47.9 249.8,46.5 249.3,44.3 247.7,43.8 245.8,44.7 245.0,43.3 242.7,42.5 241.7,41.6 240.0,42.9 238.2,42.6 236.7,43.4 235.2,43.1 233.7,42.0 231.8,42.4 230.8,42.3 228.6,41.9 227.5,41.7 226.3,39.7 225.0,39.4 223.6,38.6Z" fill="#e3f3e3"/>
<path d="M306.3,60.4 308.5,61.0 309.8,58.8 311.8,60.2 313.2,59.8 314.8,59.4 316.4,58.4 317.7,59.1 319.1,59.5 320.4,58.7 322.7,60.3 323.8,59.0 325.6,61.2 323.0,62.5 321.4,62.6 320.3,63.2 318.0,63.2 316.8,64.1 315.3,63.3 312.7,64.7 310.9,64.5 309.5,63.4 310.7,61.6 309.0,60.0 307.2,61.4Z" fill="#c6e5c6"/>
<path d="M331.7,84.5 334.6,84.8 336.3,84.5 338.4,83.6 338.7,81.4 338.2,80.4 336.4,80.3 334.9,79.6 336.4,78.6 334.7,78.4 331.7,80.1 332.6,81.9 331.0,83.8Z" fill="#5aab5a"/>
<path d="M338.2,80.4 339.6,79.6 338.4,78.4 336.4,78.6 334.9,79.6 336.4,80.3Z" fill="#5aab5a"/>
<path d="M339.2,87.4 343.1,87.0 347.1,86.3 349.6,85.5 351.5,85.6 352.2,82.9 349.7,82.2 348.9,80.5 346.6,78.8 345.7,77.4 343.9,78.8 343.1,79.8 344.0,81.6 344.0,81.7 344.0,84.7 344.0,85.2 341.7,85.4Z" fill="#256b25"/>
<path d="M344.0,81.7 341.2,81.6 341.7,82.6 342.0,83.5 339.9,84.2 341.9,84.7 344.0,84.7Z" fill="#98d098"/>
<path d="M345.7,77.4 343.9,78.8 340.5,79.3 340.5,77.9 339.2,77.0 338.4,75.6 339.6,73.5 340.5,72.4 344.0,72.4 342.2,74.2 345.7,74.0 345.4,75.6 344.0,77.0ZM336.1,74.9 338.4,72.8 337.3,74.2ZM346.4,69.1 347.5,68.8 346.9,70.2ZM343.4,71.6 344.7,71.4 344.1,72.1Z" fill="#5aab5a"/>
<path d="M336.2,66.1 337.8,66.0 337.3,67.2Z" fill="#c6e5c6"/>
<path d="M340.8,90.3 343.0,90.3 346.6,89.8 346.4,88.0 349.6,88.4 352.0,85.9 353.7,85.6 356.6,87.5 359.4,88.3 360.3,88.4 363.6,89.2 362.5,91.7 359.7,94.1 361.5,94.7 361.5,97.6 362.3,98.4 360.1,99.6 357.6,99.1 354.6,100.7 352.2,100.6 349.3,99.9 346.1,99.1 347.1,96.8 347.1,94.1 345.4,92.4 341.5,91.4ZM364.2,100.8 365.7,99.8 365.8,101.5 365.3,102.6 364.2,101.7Z" fill="#2f7d2f"/>
<path d="M346.1,99.1 349.3,99.9 352.2,100.6 354.6,100.7 354.8,101.7 352.9,102.9 350.6,103.8 348.7,105.9 349.6,107.1 348.0,109.2 345.4,110.8 341.5,110.8 339.4,112.0 338.2,110.9 336.2,109.9 336.2,108.1 337.0,106.8 336.1,105.5 337.1,104.6 337.3,103.2 338.4,102.2 337.7,101.6 334.9,101.7 333.7,101.7 332.9,99.8 335.2,98.4 339.1,98.7 343.1,98.9ZM353.4,105.7 355.2,105.4 354.6,106.2ZM319.6,125.5 320.9,125.1 320.3,126.0ZM321.6,125.8 322.2,126.0 321.9,126.5ZM324.2,124.9 325.1,124.8 324.4,125.8ZM325.1,124.1 325.8,123.9 325.4,124.4Z" fill="#3a8b3a"/>
<path d="M333.7,101.7 334.9,101.7 337.7,101.6 338.4,102.2 337.3,103.2 337.1,104.6 336.1,105.5 337.0,106.8 336.2,108.1 336.2,109.9 333.6,110.2 333.8,107.8 332.6,107.3 333.6,104.6ZM304.1,108.9 305.1,108.9 304.6,109.0ZM299.0,107.4 300.2,107.4 299.7,107.8ZM319.1,117.6 320.0,117.6 319.6,117.9Z" fill="#5aab5a"/>
<path d="M353.7,85.6 355.2,85.1 356.7,85.1 359.5,85.7 359.2,86.1 360.4,87.0 359.9,87.3 359.4,88.3 356.6,87.5Z" fill="#5aab5a"/>
<path d="M355.2,85.1 356.2,84.0 357.4,82.2 358.8,81.6 361.8,81.7 361.6,82.9 360.9,84.2 359.7,84.4 359.9,85.8 359.5,85.7 356.7,85.1Z" fill="#3a8b3a"/>
<path d="M359.4,88.3 359.9,87.3 360.6,87.9 360.3,88.4Z" fill="#c6e5c6"/>
<path d="M361.8,81.7 364.2,80.7 364.8,78.9 364.2,78.9 366.5,79.1 368.5,79.8 371.1,79.8 374.1,80.7 373.9,82.4 374.9,83.8 375.5,85.8 375.1,86.0 372.7,86.5 370.4,87.0 371.1,88.0 373.4,89.6 372.0,90.5 372.0,91.9 367.6,92.1 366.0,91.9 364.2,91.5 362.5,91.7 363.6,89.2 360.3,88.4 360.6,87.9 359.9,87.3 360.4,87.0 359.2,86.1 359.5,85.7 359.9,85.8 359.7,84.4 360.9,84.2 361.6,82.9Z" fill="#256b25"/>
<path d="M364.2,78.9 363.4,77.7 363.6,75.2 367.8,74.0 367.2,75.9 368.3,76.3 366.5,79.1ZM368.5,77.5 371.2,77.0 370.9,78.4 368.8,78.4ZM366.4,77.9 368.1,78.1 367.6,78.8Z" fill="#5aab5a"/>
<path d="M359.7,94.1 362.5,91.7 364.2,91.5 366.0,91.9 367.6,92.9 366.9,94.1 365.0,94.9 363.9,93.8 361.5,94.7Z" fill="#5aab5a"/>
<path d="M366.0,91.9 367.6,92.1 372.0,91.9 372.0,90.5 373.4,89.6 375.5,89.2 378.8,89.9 379.1,91.0 377.4,92.9 374.6,93.8 370.9,93.3 367.6,92.9Z" fill="#5aab5a"/>
<path d="M362.3,98.4 361.5,97.6 361.5,94.7 363.9,93.8 365.0,94.9 366.9,94.1 367.6,92.9 370.9,93.3 373.2,93.6 373.2,95.2 370.7,95.7 370.9,97.6 373.0,98.9 374.1,100.8 377.6,101.7 377.2,102.6 379.5,103.3 381.6,104.8 379.0,104.1 378.2,105.7 379.1,106.8 378.1,108.0 376.7,108.7 377.0,106.8 376.5,105.0 374.4,103.9 372.0,102.9 370.2,101.5 367.6,99.9 366.7,98.0 364.6,97.3ZM370.9,108.9 374.4,108.8 376.5,108.0 375.6,110.8 373.2,110.1ZM363.6,103.4 365.3,102.9 366.2,105.0 365.8,106.6 363.9,106.8Z" fill="#3a8b3a"/>
<path d="M370.4,87.0 372.7,86.5 375.1,86.0 377.7,86.4 378.8,86.8 382.1,88.4 379.0,89.6 378.8,89.9 375.5,89.2 373.4,89.6 371.1,88.0Z" fill="#98d098"/>
<path d="M374.1,80.7 377.2,80.0 380.7,79.1 381.8,79.8 383.5,79.7 386.4,79.7 389.1,79.9 390.3,80.7 391.0,82.8 390.5,83.8 391.4,86.1 388.9,88.4 388.8,89.1 386.7,88.9 384.2,88.9 382.1,88.4 378.8,86.8 377.7,86.4 375.1,86.0 375.5,85.8 374.9,83.8 373.9,82.4Z" fill="#5aab5a"/>
<path d="M378.8,89.9 379.0,89.6 382.1,88.4 384.2,88.9 386.7,88.9 388.8,89.1 387.9,90.3 385.1,90.1 382.1,91.4 379.1,91.0Z" fill="#c6e5c6"/>
<path d="M377.4,92.9 379.1,91.0 382.1,91.4 385.1,90.1 387.9,90.3 389.3,91.0 386.3,93.8 384.7,94.2 382.1,94.7 380.0,94.7 378.1,93.6Z" fill="#98d098"/>
<path d="M373.2,93.6 374.6,93.8 377.4,92.9 378.1,93.6 376.7,94.1 376.0,95.5 373.0,95.5 373.2,95.2Z" fill="#c6e5c6"/>
<path d="M373.0,95.5 376.0,95.5 376.7,94.1 378.1,93.6 380.0,94.7 382.1,94.7 382.6,96.2 382.5,96.4 378.8,95.9 376.9,95.9 377.0,97.6 379.8,99.6 381.6,100.4 381.6,100.7 380.0,99.9 377.2,98.9 375.8,97.6 375.3,96.1 374.2,95.7 373.5,96.6Z" fill="#c6e5c6"/>
<path d="M376.9,95.9 378.8,95.9 382.5,96.4 383.2,97.5 382.8,98.9 381.6,100.4 379.8,99.6 377.0,97.6Z" fill="#e3f3e3"/>
<path d="M382.5,96.4 382.6,96.2 382.1,94.7 384.7,94.2 386.8,95.9 388.6,96.8 388.9,97.6 388.4,99.8 388.4,101.0 387.0,101.1 385.2,101.7 384.2,100.3 382.8,98.9 383.2,97.5Z" fill="#c6e5c6"/>
<path d="M381.6,100.7 381.6,100.4 382.8,98.9 384.2,100.3 383.2,101.7Z" fill="#e3f3e3"/>
<path d="M383.2,101.7 384.2,100.3 385.2,101.7 385.1,102.7 386.0,103.6 384.7,105.5 383.0,104.3Z" fill="#e3f3e3"/>
<path d="M385.2,101.7 387.0,101.1 388.4,101.0 389.5,102.7 386.0,103.6 385.1,102.7Z" fill="#e3f3e3"/>
<path d="M384.7,105.5 386.0,103.6 389.5,102.7 392.1,102.4 395.2,102.0 395.8,102.6 394.7,103.6 391.2,103.8 390.3,105.0 389.1,104.3 389.5,106.2 391.2,108.1 389.8,108.7 389.8,111.1 388.6,111.3 387.2,110.6 386.3,108.7 386.3,108.0 385.6,106.9ZM390.3,112.9 393.1,112.9 395.2,113.4 392.1,113.8ZM389.8,106.9 392.1,108.3 391.2,107.4ZM394.7,106.2 395.8,106.6 395.1,106.9ZM397.9,111.5 398.6,111.3 398.0,112.2Z" fill="#5aab5a"/>
<path d="M388.4,101.0 388.4,99.8 388.9,97.6 393.0,98.5 396.5,97.8 399.2,98.5 398.2,101.5 395.2,102.0 392.1,102.4 389.5,102.7Z" fill="#c6e5c6"/>
<path d="M384.7,94.2 386.3,93.8 389.3,91.0 392.8,91.5 395.8,90.6 398.4,93.1 398.6,95.4 401.2,95.9 399.2,98.5 396.5,97.8 393.0,98.5 388.9,97.6 388.6,96.8 386.8,95.9Z" fill="#98d098"/>
<path d="M395.8,90.6 398.4,90.6 400.3,91.2 401.9,93.8 398.6,95.4 398.4,93.1Z" fill="#e3f3e3"/>
<path d="M387.9,90.3 388.8,89.1 388.9,88.4 391.4,86.1 390.5,84.9 393.8,84.2 396.3,84.4 398.6,84.7 400.1,84.9 402.6,85.2 404.9,83.8 408.7,83.4 411.3,86.8 414.1,87.4 415.7,87.7 419.4,88.2 418.7,91.4 416.1,92.6 413.0,93.2 410.5,94.3 413.2,95.6 410.6,96.7 407.8,97.3 406.1,95.6 408.0,94.3 407.0,94.1 403.5,93.4 401.9,93.8 401.2,95.9 398.6,95.4 401.9,93.8 400.3,91.2 398.4,90.6 395.8,90.6 392.8,91.5 389.3,91.0Z" fill="#c6e5c6"/>
<path d="M390.5,84.9 390.5,83.8 391.0,82.8 390.3,80.7 394.4,78.9 395.8,77.5 398.6,76.7 400.6,77.2 403.3,77.7 403.1,79.1 406.4,81.6 404.9,83.8 402.6,85.2 400.1,84.9 398.6,84.7 396.3,84.4 393.8,84.2Z" fill="#c6e5c6"/>
<path d="M386.0,78.2 386.0,76.8 388.7,76.6 389.9,76.4 392.8,76.3 395.8,77.5 394.4,78.9 390.3,80.7 389.1,79.9 389.1,78.9Z" fill="#c6e5c6"/>
<path d="M386.0,76.8 386.0,75.2 388.8,73.9 390.3,75.2 391.9,73.7 394.0,73.9 397.2,74.4 398.6,76.7 395.8,77.5 392.8,76.3 389.9,76.4 388.7,76.6Z" fill="#c6e5c6"/>
<path d="M391.9,73.7 390.3,72.3 390.3,71.4 391.8,70.7 394.1,70.4 396.2,72.0 398.2,70.9 397.2,74.4 394.0,73.9ZM387.4,72.6 389.5,72.4 388.6,73.3Z" fill="#c6e5c6"/>
<path d="M358.0,72.6 359.9,73.0 361.5,73.5 364.1,73.0 366.3,72.3 368.5,71.8 369.9,70.2 371.1,67.4 370.6,63.9 373.7,62.1 374.6,59.1 376.6,57.2 378.1,56.0 380.7,55.1 382.8,54.7 385.1,54.1 387.3,54.3 389.8,54.7 392.8,55.0 394.7,52.7 398.2,52.3 400.0,54.1 403.1,52.9 403.5,51.8 401.9,50.9 399.7,51.4 398.2,50.6 396.2,49.9 394.2,50.5 392.3,50.9 391.3,51.9 388.8,50.7 387.7,52.0 386.4,52.4 383.9,51.9 382.5,52.9 381.3,53.1 378.7,53.4 377.9,54.6 376.3,55.1 374.8,55.9 373.0,57.3 372.0,58.6 371.1,60.0 369.3,61.2 366.6,62.1 365.8,63.9 364.1,65.2 361.5,64.7 359.7,65.6 358.0,67.4 358.0,70.0Z" fill="#5aab5a"/>
<path d="M368.5,71.8 369.0,73.0 371.1,76.5 371.8,78.1 374.2,77.9 377.9,75.9 378.6,73.0 380.3,71.8 382.1,70.4 381.5,68.4 379.3,67.4 380.4,65.1 382.3,63.8 384.7,63.4 386.0,62.1 386.5,60.3 388.2,59.9 391.4,59.9 390.5,56.9 387.7,55.3 385.1,54.1 382.8,54.7 380.7,55.1 378.1,56.0 376.6,57.2 374.6,59.1 373.7,62.1 370.6,63.9 371.1,67.4 369.9,70.2ZM381.1,73.7 382.5,73.9 381.2,75.2Z" fill="#5aab5a"/>
<path d="M391.4,59.9 393.7,61.2 392.1,62.9 390.7,63.5 388.6,63.9 386.5,65.6 386.8,68.2 389.1,70.2 390.8,70.8 392.3,68.9 394.7,69.3 397.9,69.0 399.2,68.1 401.7,66.7 404.3,64.9 401.7,63.0 401.7,59.5 400.0,56.5 399.1,54.4 400.0,54.1 398.2,52.3 394.7,52.7 392.8,55.0 389.8,54.7 387.3,54.3 385.1,54.1 387.7,55.3 390.5,56.9Z" fill="#5aab5a"/>
<path d="M405.7,113.8 407.0,113.1 409.8,112.5 408.7,113.8 407.0,114.4Z" fill="#98d098"/>
<path d="M374.1,112.0 374.8,112.2 374.4,112.4Z" fill="#c6e5c6"/>
<path d="M403.1,52.9 405.1,53.8 407.0,53.5 409.2,53.2 411.8,54.5 414.0,54.8 416.0,55.5 418.7,55.9 421.0,57.4 420.1,58.8 417.9,59.3 415.7,59.3 413.4,59.6 410.8,59.2 408.7,58.3 407.8,59.0 410.5,62.3 413.1,62.7 414.8,63.2 416.6,61.6 419.7,61.8 419.2,59.9 420.9,58.7 423.6,58.8 426.2,59.0 426.7,55.1 429.7,55.6 430.6,57.9 433.2,56.5 435.2,55.5 436.9,55.3 439.9,55.0 442.0,54.4 445.5,55.1 448.4,55.2 451.1,54.0 454.2,54.2 456.0,52.9 459.7,53.1 462.1,53.7 465.6,54.2 466.5,52.9 466.1,51.1 468.7,48.1 471.7,46.5 473.9,46.7 476.6,47.8 476.6,50.8 475.7,54.2 477.8,56.9 475.2,59.0 478.7,57.8 480.1,54.2 478.7,50.8 480.5,47.6 483.1,48.1 485.7,48.5 487.5,48.5 490.1,49.0 491.0,46.4 493.8,46.4 496.9,46.1 499.7,45.8 501.5,43.8 504.0,44.0 505.2,43.0 507.9,42.7 510.2,42.0 513.2,42.3 515.5,42.1 518.2,41.7 520.7,41.5 522.3,40.4 525.2,40.1 527.3,40.0 529.0,39.2 531.7,39.0 534.7,39.7 537.9,40.1 539.2,41.0 542.3,40.8 545.2,41.1 547.8,42.9 545.3,44.2 541.7,45.2 544.4,45.3 547.0,46.0 548.9,45.9 551.9,45.9 555.3,46.7 557.5,47.2 560.4,46.6 562.9,47.7 565.3,46.7 568.8,45.9 571.5,46.4 572.6,48.9 575.0,50.8 577.3,50.5 580.2,49.9 582.3,50.5 585.5,49.7 588.2,48.6 589.9,49.2 591.9,49.0 594.2,48.1 596.0,47.6 599.2,47.3 602.4,48.4 604.7,48.5 607.2,49.6 609.7,49.4 611.7,49.9 615.2,50.9 617.3,50.4 619.9,50.8 622.9,50.8 624.8,51.4 627.5,51.6 630.1,53.2 632.9,53.1 634.8,52.6 637.2,53.8 638.6,53.2 641.5,53.0 644.4,53.1 646.7,52.5 648.5,54.2 651.1,53.9 653.3,53.3 655.5,53.0 657.2,53.0 660.2,52.8 661.9,53.8 664.2,54.4 664.5,56.8 663.6,58.6 664.2,61.1 662.5,61.6 659.8,61.8 661.4,63.0 662.5,65.8 660.3,66.5 657.1,66.0 654.6,67.0 653.1,68.4 649.9,69.4 647.6,70.0 644.4,69.4 642.1,70.0 639.7,70.0 635.3,70.4 634.5,73.5 632.7,76.1 635.0,76.6 632.7,79.3 629.2,81.9 626.2,84.0 623.4,85.8 622.2,83.1 622.2,80.3 621.5,78.8 622.2,75.2 625.7,73.5 629.2,70.9 632.7,68.9 635.3,67.2 636.2,65.6 634.3,66.1 630.8,66.2 629.2,66.9 626.7,66.6 624.0,67.2 622.8,69.3 620.5,71.1 617.4,71.7 615.2,71.8 611.7,71.7 610.0,70.7 607.2,70.6 603.8,71.1 601.0,71.0 598.6,71.4 595.6,72.7 594.2,74.0 590.7,76.1 588.3,76.6 585.8,79.1 589.8,80.5 592.5,80.1 596.5,81.9 595.1,84.9 594.9,87.5 595.1,90.1 593.5,92.7 591.6,93.6 588.7,95.7 587.2,97.1 584.5,99.4 582.3,100.1 580.8,100.9 577.9,101.0 578.5,99.8 578.8,98.0 579.0,96.2 582.0,95.9 583.8,92.5 584.9,90.5 581.1,91.1 578.5,91.5 577.6,89.4 574.2,88.5 572.3,87.9 571.2,85.5 569.7,82.8 568.0,82.1 565.3,81.4 562.6,81.6 560.1,81.9 559.2,84.9 556.6,87.9 553.4,87.9 550.8,87.6 548.7,87.1 545.7,87.8 543.7,88.5 541.7,88.9 539.4,88.4 536.5,87.7 533.0,86.8 530.8,86.7 527.7,86.4 528.1,85.2 525.9,84.6 522.3,83.8 520.4,85.8 521.1,86.6 518.3,87.1 514.6,87.5 512.2,86.8 510.2,86.3 507.9,87.0 504.1,88.4 502.9,88.9 502.0,88.9 498.3,88.2 496.7,87.2 494.5,85.8 491.3,85.9 489.2,86.1 487.6,84.4 485.5,81.7 483.1,80.5 480.8,80.8 478.7,81.2 477.7,80.5 473.5,80.1 473.8,78.2 471.6,78.4 468.2,78.8 465.4,79.1 462.5,79.8 459.6,80.1 457.7,80.5 456.6,83.6 456.0,85.8 453.3,86.4 450.9,86.1 449.0,85.8 445.5,86.1 443.1,85.5 439.3,84.7 438.1,84.5 434.2,86.4 431.5,87.7 430.8,90.1 432.5,91.9 434.1,93.4 435.3,94.0 432.3,95.4 430.9,97.1 432.3,99.8 434.2,101.8 430.6,101.7 428.0,100.4 425.3,99.9 421.7,99.3 419.2,99.1 417.1,97.5 414.8,96.8 413.2,95.9 415.7,94.0 417.8,92.4 416.1,92.6 418.7,91.4 419.4,88.2 415.7,87.7 414.1,87.4 411.3,86.8 408.7,83.4 404.9,83.8 406.4,81.6 403.1,79.1 403.3,77.7 400.6,77.2 398.6,76.7 397.2,74.4 398.2,70.9 400.5,71.4 402.1,70.2 400.3,70.4 397.9,69.0 399.2,68.1 401.7,66.7 404.3,64.9 401.7,63.0 401.7,59.5 400.0,56.5 399.1,54.4 400.0,54.1ZM383.5,79.7 386.0,78.2 389.1,78.9 389.1,79.9 386.4,79.7ZM598.9,79.8 600.3,83.1 600.0,87.5 602.4,89.2 601.5,90.7 599.5,92.8 600.3,94.5 597.4,93.4 597.7,91.0 597.7,87.5 597.4,83.1ZM439.3,49.9 442.0,51.1 445.2,51.1 447.0,51.4 449.8,51.5 448.0,49.2 445.5,48.1 447.2,45.5 448.6,44.2 451.1,44.3 454.2,44.2 456.0,42.9 458.0,42.7 460.4,42.2 462.9,41.1 464.3,41.9 466.4,40.8 469.1,40.4 464.7,40.2 462.5,40.5 460.1,41.2 457.6,41.4 454.3,42.1 452.5,42.0 449.8,42.7 448.2,42.7 445.5,43.8 442.0,46.4ZM515.5,36.8 517.2,37.8 519.2,37.2 522.3,38.9 524.2,38.5 526.5,38.0 528.1,38.1 530.3,38.1 533.0,36.8 530.8,35.8 528.9,35.5 527.0,34.1 524.2,34.1 521.1,33.4 518.4,34.2 515.5,33.2ZM589.0,42.9 592.4,43.0 594.2,43.7 597.7,43.8 599.4,43.4 602.9,43.3 604.1,43.6 607.2,43.2 609.2,43.0 611.7,43.4 609.7,42.8 606.9,43.2 604.7,42.0 601.7,41.2 598.7,41.6 597.3,42.3 594.2,42.0 591.3,43.1ZM594.2,46.4 597.5,47.2 599.5,46.9 597.7,45.7ZM661.6,50.8 664.2,50.2 664.2,50.9ZM34.2,50.2 38.6,50.4 36.4,51.0 34.2,50.9ZM34.2,54.4 35.8,54.9 38.3,55.7 41.3,55.8 43.0,56.9 44.8,57.5 46.9,58.2 50.4,58.0 52.2,59.3 50.5,60.7 47.3,62.1 45.5,62.0 43.0,61.6 39.6,60.7 37.7,60.4 34.2,61.1 34.9,58.8 34.8,56.7ZM434.1,53.7 436.7,54.2 435.8,54.8ZM451.6,52.1 454.2,52.7 453.0,53.2Z" fill="#5aab5a"/>
<path d="M394.7,103.6 395.8,102.6 395.2,102.0 398.2,101.5 400.0,102.9 404.3,102.9 407.8,101.5 410.5,101.4 413.1,102.7 416.6,103.3 419.8,103.0 421.8,102.4 424.1,102.4 425.7,103.8 427.6,105.5 426.6,107.8 427.6,109.9 423.4,110.1 421.0,110.1 417.1,110.8 413.4,110.6 412.6,112.2 412.2,110.4 409.6,110.8 407.0,111.8 403.5,110.6 400.8,111.6 397.2,110.2 395.2,107.8 395.9,106.2 395.1,105.0 396.1,104.1Z" fill="#5aab5a"/>
<path d="M419.2,99.1 421.7,99.3 425.3,99.9 428.0,100.4 430.6,101.7 430.4,102.9 428.0,102.7 425.2,103.1 424.1,102.4 421.8,102.4 422.0,100.8Z" fill="#c6e5c6"/>
<path d="M425.2,103.1 428.0,102.7 430.4,105.7 429.9,106.9 428.0,106.1 427.6,105.5 425.7,103.8 424.1,102.4Z" fill="#c6e5c6"/>
<path d="M428.0,102.7 430.4,102.9 430.6,101.7 434.2,101.8 437.2,104.3 435.0,106.8 434.8,107.8 433.2,105.7 429.9,106.9 430.4,105.7Z" fill="#c6e5c6"/>
<path d="M412.6,112.2 413.4,110.6 417.1,110.8 421.0,110.1 423.4,110.1 422.7,111.6 421.3,114.1 419.2,115.3 417.1,116.6 413.6,118.5 411.9,117.4 411.9,116.7 412.9,114.8 412.0,114.4 412.2,113.4Z" fill="#c6e5c6"/>
<path d="M410.6,117.1 412.0,114.4 412.9,114.8 411.9,116.7Z" fill="#98d098"/>
<path d="M409.2,120.2 410.6,117.1 411.9,116.7 411.9,117.4 411.5,118.1 411.3,120.2 410.5,123.4Z" fill="#5aab5a"/>
<path d="M410.5,123.4 411.3,120.2 411.5,118.1 411.9,117.4 413.6,118.5 417.1,116.6 417.8,118.6 414.0,119.9 415.7,121.6 414.8,122.5 413.1,123.4 412.2,123.9Z" fill="#98d098"/>
<path d="M423.4,110.1 427.6,109.9 428.7,112.0 430.1,113.6 428.8,115.5 429.7,117.2 432.9,119.4 432.7,120.8 434.1,122.5 433.0,122.5 432.2,122.3 430.6,124.1 427.4,123.9 425.0,122.1 422.7,120.6 419.9,119.2 417.8,118.6 417.1,116.6 419.2,115.3 421.3,114.1 422.7,111.6Z" fill="#98d098"/>
<path d="M430.6,124.1 432.2,122.3 433.2,122.7 433.9,125.0 432.3,125.1Z" fill="#98d098"/>
<path d="M410.4,123.6 412.2,123.9 413.1,123.4 414.8,122.5 415.7,121.6 414.0,119.9 417.8,118.6 419.9,119.2 422.7,120.6 425.0,122.1 427.4,123.9 430.6,124.1 432.3,125.1 433.9,125.0 435.0,126.9 437.1,128.3 438.1,131.7 439.5,132.6 441.2,134.8 443.3,135.1 445.8,135.3 446.7,136.5 445.5,140.0 442.3,141.1 440.2,141.8 437.0,142.3 435.0,142.4 433.6,143.1 431.5,145.2 428.3,144.6 425.2,144.4 424.8,145.9 424.1,146.3 423.2,144.4 421.0,140.9 419.5,139.3 417.8,137.4 416.6,133.9 414.3,131.2 412.2,127.8 410.5,125.8 409.8,125.8Z" fill="#5aab5a"/>
<path d="M424.1,146.3 424.8,145.9 425.2,144.4 428.3,144.6 431.5,145.2 433.6,143.1 435.0,142.4 437.0,142.3 440.2,141.8 441.0,143.4 442.1,145.9 440.6,147.7 438.5,148.5 435.0,150.5 432.8,151.4 430.9,152.3 428.0,152.6 425.3,152.8 424.1,149.1Z" fill="#c6e5c6"/>
<path d="M442.1,145.9 441.0,143.4 440.2,141.8 442.3,141.1 445.5,140.0 446.7,136.5 445.8,135.3 447.2,132.8 447.9,131.4 448.6,132.6 452.1,133.7 453.9,135.6 451.6,139.3 450.4,141.8 447.7,143.7 445.5,145.2ZM447.4,129.4 448.1,129.0 447.7,130.0Z" fill="#c6e5c6"/>
<path d="M439.5,132.6 441.2,132.6 444.6,132.5 447.4,129.4 447.9,131.4 447.2,132.8 445.8,135.3 443.3,135.1 441.2,134.8Z" fill="#98d098"/>
<path d="M438.1,131.7 438.1,130.4 439.0,129.3 439.5,130.7 439.5,131.9Z" fill="#98d098"/>
<path d="M427.6,105.5 428.0,106.1 429.9,106.9 433.2,105.7 434.8,107.8 436.7,109.6 440.2,110.8 443.5,110.2 445.1,109.4 448.1,108.1 451.1,108.9 453.0,109.4 456.3,110.9 456.3,112.7 455.2,115.0 455.5,117.5 455.6,119.9 457.4,120.8 455.8,122.8 457.4,124.7 460.0,127.4 458.3,129.4 457.0,130.9 454.0,131.0 451.6,130.2 449.0,127.9 447.9,127.6 444.9,128.4 441.1,126.7 438.3,124.2 436.7,122.1 434.1,122.5 432.7,120.8 432.9,119.4 429.7,117.2 428.8,115.5 430.1,113.6 428.7,112.0 427.6,109.9 426.6,107.8Z" fill="#5aab5a"/>
<path d="M443.5,110.2 442.0,106.8 441.6,105.0 442.8,103.2 441.8,101.7 443.7,101.0 446.3,102.7 449.0,102.7 451.6,100.3 454.2,101.1 457.5,103.1 458.9,104.4 461.2,106.8 463.1,108.0 465.6,109.6 462.6,110.1 460.2,112.0 458.6,113.2 456.3,112.7 456.3,110.9 453.0,109.4 451.1,108.9 448.1,108.1 445.1,109.4Z" fill="#f3f9f3"/>
<path d="M447.2,96.2 449.1,95.7 451.8,95.2 453.6,96.1 456.0,97.3 459.9,98.1 462.1,98.7 464.7,100.8 465.6,101.7 468.2,102.9 471.7,101.1 473.5,101.0 472.6,102.6 475.3,103.1 477.0,103.6 473.5,104.6 472.4,104.6 469.1,104.6 468.2,105.9 467.2,106.9 468.6,108.1 467.9,109.9 465.6,109.6 463.1,108.0 461.2,106.8 458.9,104.4 457.5,103.1 454.2,101.1 451.6,100.3 449.0,102.7 447.2,102.7 447.2,98.8Z" fill="#c6e5c6"/>
<path d="M435.3,94.0 434.1,93.4 432.5,91.9 430.8,90.1 431.5,87.7 434.2,86.4 438.1,84.5 439.3,84.7 443.1,85.5 445.5,86.1 449.0,85.8 450.9,86.1 453.3,86.4 456.0,85.8 456.6,83.6 457.7,80.5 459.6,80.1 462.5,79.8 465.4,79.1 468.2,78.8 471.6,78.4 473.8,78.2 473.5,80.1 477.7,80.5 478.7,81.2 480.8,80.8 483.1,80.5 485.5,81.7 487.6,84.4 489.2,86.1 491.3,85.9 494.5,85.8 496.7,87.2 498.3,88.2 502.0,88.9 499.2,90.5 498.8,92.6 494.5,92.4 493.2,95.4 489.7,96.2 489.6,100.1 489.6,101.3 487.5,100.1 485.2,100.1 482.3,100.0 480.5,100.1 477.8,99.8 475.4,100.5 473.5,101.0 471.7,101.1 468.2,102.9 465.6,101.7 464.7,100.8 462.1,98.7 459.9,98.1 456.0,97.3 453.6,96.1 451.8,95.2 449.1,95.7 447.2,96.2 447.2,98.8 447.2,102.7 446.3,102.7 443.7,101.0 441.8,101.7 440.9,100.1 438.8,99.4 438.3,96.9 439.0,95.7 442.0,95.7 442.0,92.9 438.5,92.8Z" fill="#c6e5c6"/>
<path d="M473.5,101.0 475.4,100.5 477.8,99.8 480.5,100.1 482.3,100.0 485.2,100.1 487.5,100.1 489.6,101.3 485.7,103.2 483.1,104.3 480.8,105.1 478.4,105.7 478.0,106.1 475.6,105.9 473.5,106.1 470.8,105.7 472.4,104.6 473.5,104.6 477.0,103.6 475.3,103.1 472.6,102.6Z" fill="#e3f3e3"/>
<path d="M467.9,109.9 468.6,108.1 467.2,106.9 468.2,105.9 469.1,104.6 472.4,104.6 470.8,105.7 473.5,106.1 475.6,105.9 478.0,106.1 480.5,107.6 480.3,109.9 478.4,110.1 475.2,110.8 474.3,108.7 472.1,109.2 470.5,110.1Z" fill="#e3f3e3"/>
<path d="M456.3,112.7 458.6,113.2 460.2,112.0 462.6,110.1 465.6,109.6 467.9,109.9 470.5,110.1 472.1,109.2 474.3,108.7 475.2,110.8 478.4,110.1 480.3,109.9 479.6,110.2 476.3,111.1 474.3,111.5 473.6,115.3 471.5,115.7 470.5,119.2 468.4,119.8 465.4,120.9 465.2,122.8 462.8,123.0 461.4,123.3 458.6,123.6 455.8,122.8 457.4,120.8 455.6,119.9 455.5,117.5 455.2,115.0Z" fill="#f3f9f3"/>
<path d="M457.0,130.9 458.3,129.4 460.0,127.4 457.4,124.7 455.8,122.8 458.6,123.6 461.4,123.3 462.8,123.0 465.2,122.8 465.4,120.9 468.4,119.8 470.5,119.2 471.5,115.7 473.6,115.3 474.3,111.5 476.3,111.1 479.6,110.2 481.3,110.6 483.2,111.6 485.4,112.9 484.0,114.6 481.2,115.9 478.7,117.2 479.6,120.8 477.0,122.9 475.3,124.0 472.6,126.0 470.8,127.8 472.6,130.0 473.5,132.3 470.8,133.1 468.6,133.5 466.5,131.6 463.8,131.2 462.1,130.9 459.3,130.5Z" fill="#5aab5a"/>
<path d="M468.6,133.5 470.8,133.1 473.5,132.3 472.6,130.0 470.8,127.8 472.6,126.0 475.3,124.0 477.0,122.9 479.6,120.8 478.7,117.2 481.2,115.9 484.0,114.6 485.4,112.9 487.5,114.6 486.6,118.1 487.8,120.8 491.0,122.1 489.4,124.6 492.6,126.2 494.5,127.1 497.2,127.8 498.8,128.3 501.7,128.5 503.4,128.6 503.4,126.2 504.6,127.4 506.4,128.1 510.2,127.9 510.2,126.4 513.7,123.9 517.2,123.6 519.5,125.6 517.6,127.4 515.8,128.4 514.8,130.9 514.1,133.0 512.5,133.0 512.7,136.1 511.2,136.7 510.7,133.5 508.8,133.5 510.9,131.2 509.2,131.1 506.4,130.7 506.4,129.1 503.9,128.8 503.6,131.2 504.6,132.5 504.4,134.4 505.0,136.7 501.5,137.4 500.6,139.6 498.0,140.9 495.8,142.1 495.0,144.9 493.2,145.8 489.6,147.9 489.7,151.7 488.7,154.3 488.9,157.0 487.5,158.9 486.1,159.4 484.8,160.8 482.7,157.7 482.1,156.0 480.5,153.1 479.2,149.1 478.5,147.1 477.5,144.4 476.6,141.6 476.6,138.2 476.1,136.5 473.5,138.6 470.3,136.1 472.2,134.8ZM511.4,151.4 512.0,151.7 511.6,154.7 511.1,154.0ZM513.2,162.4 513.5,162.8 513.4,163.1Z" fill="#5aab5a"/>
<path d="M489.4,124.6 491.0,122.1 493.1,122.3 496.6,124.4 499.7,126.0 503.4,126.2 503.4,128.6 501.7,128.5 498.8,128.3 497.2,127.8 494.5,127.1 492.6,126.2Z" fill="#c6e5c6"/>
<path d="M504.6,127.4 506.4,125.6 509.7,126.4 510.2,127.9 506.4,128.1Z" fill="#e3f3e3"/>
<path d="M505.0,136.7 504.4,134.4 504.6,132.5 503.6,131.2 503.9,128.8 506.4,129.1 506.4,130.7 509.2,131.1 510.9,131.2 508.8,133.5 510.7,133.5 511.2,136.7 510.7,138.6 510.0,135.8 507.4,136.3Z" fill="#98d098"/>
<path d="M488.9,158.2 489.7,157.9 491.1,159.4 492.4,161.7 491.8,164.0 489.7,164.5 488.7,161.0Z" fill="#c6e5c6"/>
<path d="M510.7,138.6 511.2,136.7 512.7,136.1 512.5,133.0 514.1,133.0 514.8,130.9 515.8,128.4 517.6,127.4 519.5,125.6 521.2,126.7 521.9,129.9 520.0,132.6 522.1,133.0 522.8,136.1 526.1,137.2 524.4,139.5 522.5,139.8 520.2,142.6 522.3,146.5 521.1,148.4 522.6,151.4 523.5,154.5 521.9,157.5 521.6,154.0 521.2,152.0 520.2,149.1 519.8,146.1 517.2,145.9 514.2,147.0 514.6,142.6 512.8,140.4Z" fill="#f3f9f3"/>
<path d="M521.9,157.5 523.5,154.5 522.6,151.4 521.1,148.4 522.3,146.5 520.2,142.6 522.5,139.8 524.4,139.5 525.2,140.9 526.3,140.9 526.0,144.0 527.9,143.1 531.2,143.0 532.6,146.1 534.0,148.1 533.3,150.0 529.5,150.1 528.4,151.2 529.3,154.5 526.0,152.8 525.1,151.4 524.2,153.6 522.8,156.6 523.0,158.9 524.7,160.5 526.1,162.9 527.9,164.1 526.1,165.0 524.4,163.6 523.7,163.1 521.2,161.0Z" fill="#98d098"/>
<path d="M524.4,139.5 526.1,137.2 527.9,135.8 529.5,138.6 532.1,139.3 531.2,141.1 533.3,142.4 535.8,145.2 537.3,148.6 537.3,149.3 534.7,149.8 533.3,150.0 534.0,148.1 532.6,146.1 531.2,143.0 527.9,143.1 526.0,144.0 526.3,140.9 525.2,140.9Z" fill="#e3f3e3"/>
<path d="M527.9,135.8 530.3,135.3 533.5,134.2 535.9,135.1 538.2,137.4 535.9,138.8 534.2,141.8 535.6,143.9 538.6,146.8 538.8,148.7 540.5,151.4 540.3,154.7 537.0,156.8 535.9,158.4 533.0,159.9 532.8,157.5 532.1,156.8 534.5,154.7 537.3,153.5 537.3,149.3 537.3,148.6 535.8,145.2 533.3,142.4 531.2,141.1 532.1,139.3 529.5,138.6Z" fill="#98d098"/>
<path d="M529.3,154.5 528.4,151.2 529.5,150.1 533.3,150.0 534.7,149.8 537.3,149.3 537.3,153.5 534.5,154.7 532.1,156.8 530.3,156.4Z" fill="#e3f3e3"/>
<path d="M524.4,163.6 526.1,165.0 527.9,164.1 530.2,166.6 530.2,170.3 531.6,172.6 530.3,172.7 527.7,171.9 526.5,169.9 525.2,167.6 524.7,165.4ZM541.0,171.5 544.2,170.4 547.0,169.4 548.7,166.9 551.3,165.7 553.6,162.8 555.2,163.8 557.8,165.9 555.7,167.5 555.0,167.6 551.9,167.5 550.5,169.8 550.5,171.5 548.4,172.6 545.6,172.4 543.5,173.2 541.5,172.7Z" fill="#5aab5a"/>
<path d="M548.9,166.9 551.0,166.2 550.5,167.5Z" fill="#c6e5c6"/>
<path d="M516.0,165.2 519.8,165.9 522.5,168.5 524.7,170.3 527.8,173.2 530.2,173.9 530.7,176.9 532.1,178.0 534.7,180.6 534.1,182.9 534.4,185.1 532.2,185.1 530.3,183.3 528.2,182.0 527.1,178.9 524.9,176.8 522.9,175.1 521.9,172.0 519.0,169.1 517.1,167.6ZM533.3,186.9 535.9,185.5 539.2,186.7 543.3,186.2 546.6,187.1 549.6,188.6 549.4,190.2 546.3,189.1 544.3,189.5 542.5,188.6 539.1,188.6 535.4,187.9ZM541.0,171.5 541.5,172.7 543.5,173.2 545.6,172.4 548.4,172.6 550.5,171.5 550.5,169.8 551.9,167.5 555.0,167.6 555.7,171.1 557.5,173.2 555.0,174.6 553.1,177.6 552.7,181.3 549.8,182.2 547.0,180.8 544.7,180.9 542.1,180.1 541.7,177.4 540.0,174.5 540.0,172.4ZM558.9,173.6 560.8,172.7 564.8,172.8 567.1,172.2 568.3,172.4 566.9,174.3 563.8,174.7 561.3,174.1 559.7,174.5 559.4,176.4 562.0,176.6 565.0,176.2 565.0,177.1 562.4,178.1 563.8,181.3 564.8,182.9 563.6,184.4 562.0,183.4 561.8,181.8 560.8,180.2 559.9,181.5 559.9,184.6 558.3,184.6 558.3,181.1 557.1,179.7 557.4,176.8 558.7,175.2ZM565.3,193.0 566.2,191.3 568.0,190.6 568.1,191.4 566.9,192.9ZM549.6,189.4 551.7,189.7 550.8,190.4ZM552.2,189.5 554.3,190.3 557.5,189.5 557.5,190.6 555.5,190.7 552.2,190.8ZM559.0,189.7 561.5,189.4 564.5,189.4 564.1,190.4 561.2,189.6 559.0,190.4ZM557.5,191.6 560.6,192.3 559.2,193.0ZM572.3,171.9 573.2,171.1 574.4,173.2 573.2,176.4 572.5,174.1ZM573.2,180.2 575.8,180.6 578.1,180.2 577.6,181.3 573.2,181.1ZM569.7,180.6 571.8,180.8 570.6,181.6ZM578.5,176.4 581.1,175.7 584.0,176.4 584.0,179.4 585.5,180.8 587.2,179.0 589.8,177.8 592.5,178.5 596.0,179.6 596.0,182.0 595.9,184.6 595.9,186.9 596.0,189.1 596.0,190.9 593.3,189.2 590.7,189.7 592.1,187.2 590.7,184.6 589.5,183.2 586.3,182.7 582.8,181.8 581.6,182.0 581.8,179.6 583.4,179.0 580.2,178.5 578.5,177.4ZM533.3,177.8 536.1,179.9 534.7,178.9ZM519.3,172.6 520.5,173.9 519.5,173.4ZM521.8,176.8 523.0,178.1 522.1,177.8ZM584.0,185.1 585.1,186.0 584.2,186.9ZM578.5,188.1 579.7,187.6 579.0,189.0Z" fill="#98d098"/>
<path d="M568.0,190.6 572.0,189.7 569.7,191.3 568.1,191.4Z" fill="#e3f3e3"/>
<path d="M596.0,179.6 598.3,181.0 602.1,181.8 604.4,184.3 607.3,185.5 607.9,186.7 606.5,186.9 608.2,189.0 610.8,191.6 612.9,193.4 611.4,193.2 607.9,192.7 605.6,190.4 602.1,188.5 600.3,189.5 599.5,191.1 596.0,190.9 596.0,189.1 595.9,186.9 595.9,184.6 596.0,182.0ZM608.7,184.8 612.6,184.6 615.5,182.4 615.7,183.8 613.1,185.9 610.0,185.9ZM613.1,179.6 616.1,181.6 617.0,183.2 616.2,182.4ZM619.9,184.6 622.0,186.9 620.8,186.4ZM605.6,178.5 607.0,178.5 606.5,178.9Z" fill="#f3f9f3"/>
<path d="M623.1,186.7 624.8,187.9 624.0,187.8ZM626.6,188.3 628.9,189.7 627.8,189.4ZM628.5,191.3 630.6,192.3 629.2,192.1ZM630.4,189.7 631.5,191.4 630.8,190.9ZM631.5,193.0 633.2,193.9 632.4,193.6Z" fill="#f3f9f3"/>
<path d="M640.8,200.7 641.8,202.1 641.1,202.3ZM642.0,203.0 642.9,203.9 642.2,203.9ZM643.5,205.8 644.1,206.1 643.7,206.3ZM645.0,207.7 645.5,208.1 645.1,208.2Z" fill="#f3f9f3"/>
<path d="M636.2,210.2 638.5,212.6 641.3,214.0 639.7,213.5 636.2,211.1Z" fill="#e3f3e3"/>
<path d="M659.5,205.6 661.8,206.0 661.0,206.9 659.7,206.7ZM661.9,204.2 664.0,203.5 663.3,204.4Z" fill="#e3f3e3"/>
<path d="M47.0,198.6 47.9,198.6 47.5,199.1ZM48.4,199.3 49.1,199.3 48.7,199.7ZM42.4,211.9 43.0,211.9 42.6,212.3ZM87.4,205.6 88.1,205.8 87.8,206.3ZM602.4,151.4 602.8,151.2 602.6,151.7ZM584.6,161.9 584.9,161.7 584.8,162.2ZM626.0,162.9 626.4,162.8 626.2,163.1ZM648.6,162.6 649.0,162.4 648.8,162.8ZM651.8,172.6 652.1,172.4 652.0,172.7ZM103.9,190.4 104.2,190.6 104.0,190.8ZM662.6,189.9 662.8,189.9 662.7,190.1Z" fill="#f3f9f3"/>
<path d="M560.2,142.6 563.1,142.6 563.2,146.5 562.0,147.4 562.2,150.1 566.2,150.9 566.4,152.9 565.0,152.1 563.6,150.7 561.0,151.2 560.2,149.8 559.2,146.6 559.9,144.4ZM562.9,162.9 565.3,159.8 568.7,157.9 569.1,160.9 570.6,162.2 568.7,165.2 566.2,162.9ZM566.7,153.1 569.2,155.4 568.0,157.5 567.1,155.2ZM562.7,154.2 564.8,155.2 565.2,157.9 563.8,158.6 562.7,156.6ZM554.3,160.3 556.5,157.3 558.3,155.2 558.0,156.8 556.9,159.2 554.8,160.5ZM559.9,151.6 561.7,151.7 561.5,153.5ZM565.2,156.6 566.2,155.4 565.9,157.5ZM566.2,157.3 567.2,157.5 566.7,158.2Z" fill="#c6e5c6"/>
<path d="M559.6,134.8 561.0,131.1 562.7,131.2 561.5,134.8 560.6,136.5Z" fill="#5aab5a"/>
<path d="M578.3,115.5 581.1,112.9 583.1,113.2 586.3,112.7 588.6,109.9 591.6,109.6 593.9,106.8 594.2,103.9 596.3,102.6 596.8,104.1 597.7,105.9 596.8,108.0 595.8,110.2 595.6,112.5 593.9,113.8 591.9,114.3 589.0,114.4 588.6,115.0 586.9,116.4 585.6,114.4 582.8,114.8 580.5,115.5ZM594.7,102.4 596.8,99.2 597.2,95.6 599.5,97.1 603.5,97.5 603.8,99.2 602.4,99.9 600.0,101.5 597.4,100.4 595.4,100.6 596.0,102.0ZM578.3,115.7 579.7,116.2 580.2,117.6 579.0,120.1 577.9,120.8 577.0,120.1 577.2,117.9 576.2,117.2 576.5,116.4ZM581.1,115.7 584.0,115.0 584.9,115.9 584.0,116.7 582.0,117.8 580.9,116.6ZM591.0,108.0 591.8,108.3 591.2,108.9Z" fill="#5aab5a"/>
<path d="M566.9,105.0 568.5,104.0 571.3,101.9 573.7,102.4 576.2,100.6 577.9,101.0 576.2,103.4 572.3,105.4 573.9,107.4 570.9,108.9 568.7,108.9 567.4,108.3 568.7,106.1Z" fill="#f3f9f3"/>
<path d="M570.9,108.9 573.9,107.4 575.7,110.2 575.7,112.9 574.2,113.9 572.3,114.1 570.4,114.8 570.6,112.7 570.8,110.2ZM570.1,116.7 571.3,116.4 570.8,116.9Z" fill="#5aab5a"/>
<path d="M502.9,88.9 504.1,88.4 507.9,87.0 510.2,86.3 512.2,86.8 514.6,87.5 518.3,87.1 521.1,86.6 520.4,85.8 522.3,83.8 525.9,84.6 528.1,85.2 527.7,86.4 530.8,86.7 533.0,86.8 536.5,87.7 539.4,88.4 541.7,88.9 543.7,88.5 545.7,87.8 548.7,87.1 550.8,87.6 553.4,87.9 551.3,91.2 554.1,91.2 556.6,91.2 559.0,93.3 556.5,93.6 553.2,94.0 551.0,95.3 548.7,96.4 545.0,96.2 545.0,98.5 541.7,100.3 539.8,100.8 536.9,101.2 535.8,101.5 533.0,102.2 530.5,101.7 528.4,101.1 526.0,100.4 523.7,100.5 521.9,100.4 519.0,100.3 517.0,98.2 516.2,97.5 512.8,96.2 508.5,95.9 508.3,92.9 506.4,91.2 503.2,89.9Z" fill="#c6e5c6"/>
<path d="M502.0,88.9 502.9,88.9 503.2,89.9 506.4,91.2 508.3,92.9 508.5,95.9 512.8,96.2 516.2,97.5 517.0,98.2 519.0,100.3 521.9,100.4 523.7,100.5 526.0,100.4 528.4,101.1 530.5,101.7 533.0,102.2 535.8,101.5 536.9,101.2 539.8,100.8 541.7,100.3 545.0,98.5 545.0,96.2 548.7,96.4 551.0,95.3 553.2,94.0 556.5,93.6 559.0,93.3 556.6,91.2 554.1,91.2 551.3,91.2 553.4,87.9 556.6,87.9 559.2,84.9 560.1,81.9 562.6,81.6 565.3,81.4 568.0,82.1 569.7,82.8 571.2,85.5 572.3,87.9 574.2,88.5 577.6,89.4 578.5,91.5 581.1,91.1 584.9,90.5 583.8,92.5 582.0,95.9 579.0,96.2 578.8,98.0 578.5,99.8 577.9,101.0 576.2,100.6 573.7,102.4 571.3,101.9 568.5,104.0 566.9,105.0 565.4,106.3 562.0,106.9 562.7,103.9 560.8,103.8 558.3,105.4 555.4,106.8 557.1,109.2 560.6,108.9 563.8,109.6 560.1,111.8 558.0,113.8 559.2,116.9 560.8,118.1 562.5,119.7 562.5,121.1 560.8,122.0 562.7,122.9 561.8,125.6 559.2,128.6 557.5,130.9 555.7,132.3 553.4,134.2 551.8,135.0 549.2,136.0 547.8,136.1 544.9,137.2 542.4,137.7 542.1,139.5 541.4,137.6 538.2,137.4 535.9,135.1 533.5,134.2 530.3,135.3 527.9,135.8 526.1,137.2 522.8,136.1 522.1,133.0 520.0,132.6 521.9,129.9 521.2,126.7 519.5,125.6 517.2,123.6 513.7,123.9 510.2,126.4 509.7,126.4 506.4,125.6 504.6,127.4 503.4,126.2 499.7,126.0 496.6,124.4 493.1,122.3 491.0,122.1 487.8,120.8 486.6,118.1 487.5,114.6 485.4,112.9 483.2,111.6 481.3,110.6 480.3,109.9 480.5,107.6 478.0,106.1 478.4,105.7 480.8,105.1 483.1,104.3 485.7,103.2 489.6,101.3 489.6,100.1 489.7,96.2 493.2,95.4 494.5,92.4 498.8,92.6 499.2,90.5ZM539.4,141.2 542.2,139.8 543.5,140.7 541.7,143.0 539.4,142.4Z" fill="#1a5319"/>
<path d="M548.9,213.1 547.8,217.0 547.3,220.5 549.1,223.1 550.0,224.6 550.5,227.5 551.7,231.0 550.5,235.0 552.5,235.9 555.5,236.4 559.2,234.3 563.0,234.7 565.3,234.3 567.0,232.9 569.7,231.5 571.6,230.4 575.0,230.5 578.8,230.1 582.8,231.4 584.8,233.3 586.3,235.9 588.1,234.8 589.8,232.8 590.4,231.9 589.9,233.9 589.8,236.6 591.6,235.9 591.0,237.3 593.7,239.4 595.6,241.5 598.0,241.6 600.3,242.9 602.8,241.5 605.4,243.4 608.2,241.3 611.7,240.6 612.5,237.9 613.1,236.2 614.0,234.1 616.1,231.0 617.1,227.5 618.0,224.4 617.1,220.5 616.8,219.3 615.7,217.6 613.5,216.1 610.8,213.5 608.7,210.0 605.2,208.1 604.7,205.6 604.2,203.6 603.7,201.2 602.1,199.9 600.3,197.4 598.6,193.7 597.0,196.9 597.2,201.2 596.7,203.2 595.6,205.6 593.0,205.4 590.4,203.0 586.3,201.2 587.2,198.6 588.6,196.4 585.8,196.4 584.0,196.6 581.4,194.9 578.5,196.4 576.6,198.2 576.2,200.9 573.5,201.1 571.1,199.3 568.0,202.1 565.3,205.3 563.1,206.5 561.0,209.3 557.5,210.0 554.0,211.2 550.5,212.6ZM602.4,246.2 605.6,246.9 608.7,246.6 608.7,248.9 607.3,250.6 605.0,251.3 603.3,249.4 602.4,246.8ZM588.1,237.5 590.7,237.6 589.5,238.0ZM577.2,194.9 579.0,194.8 578.1,195.6ZM588.1,199.1 588.8,199.5 588.2,199.9ZM601.0,244.5 601.4,245.0 601.0,245.2ZM608.2,244.6 608.7,245.4 608.2,245.7Z" fill="#256b25"/>
<path d="M651.4,235.2 653.6,237.1 654.6,238.4 656.3,239.1 657.2,240.8 661.6,241.0 660.4,243.6 658.8,245.5 656.0,247.8 655.1,247.3 655.8,245.0 653.4,243.8 654.8,242.4 654.9,239.8 653.4,238.2 652.0,236.2ZM651.4,245.9 654.2,247.1 653.9,248.3 651.6,251.1 649.0,252.5 647.9,255.3 645.0,256.6 643.7,256.6 640.6,255.5 643.2,252.5 646.7,250.6 649.3,248.1ZM642.5,256.9 643.5,257.1 642.9,257.6Z" fill="#5aab5a"/>
<path d="M338.9,112.4 339.9,112.2 343.3,113.0 345.4,113.6 346.1,114.6 346.2,117.2 347.1,118.6 342.9,119.9 342.9,120.9 340.5,122.5 337.8,123.2 334.0,124.8 334.0,126.6 332.1,126.5 329.5,126.5 326.1,126.6 329.8,124.6 332.1,123.2 332.4,121.8 332.1,119.9 334.3,116.7 337.3,115.3Z" fill="#c6e5c6"/>
<path d="M326.1,126.6 329.5,126.5 332.1,126.5 334.0,126.6 334.0,129.5 331.2,129.5 328.2,129.5 328.2,133.9 326.5,134.8 326.5,137.7 324.4,138.0 321.4,138.3 319.4,138.6 319.5,137.6 321.2,133.5 323.1,131.2 324.0,129.0Z" fill="#c6e5c6"/>
<path d="M319.4,138.6 321.4,138.3 324.4,138.0 326.5,137.7 326.5,134.8 328.2,133.9 328.2,129.5 331.2,129.5 334.0,129.5 334.0,127.2 336.6,128.9 338.7,129.9 340.7,131.2 337.7,131.2 338.1,134.1 338.5,136.3 338.8,138.4 339.2,141.4 339.5,144.0 339.9,146.5 339.4,147.9 336.8,147.8 332.9,147.9 330.5,148.1 329.1,147.7 327.9,149.1 325.6,146.8 323.8,145.9 320.3,146.8 321.2,143.5 320.9,141.4 320.3,140.0Z" fill="#f3f9f3"/>
<path d="M345.4,113.6 349.2,112.2 351.2,111.6 354.5,110.4 357.5,110.1 359.7,110.2 362.3,109.6 364.2,110.4 363.7,113.4 362.3,115.9 365.0,118.8 365.8,122.1 366.2,125.1 366.5,126.9 366.2,128.6 366.7,131.6 370.1,133.9 368.4,134.8 365.8,136.5 364.8,137.1 362.3,138.4 359.4,140.9 357.7,140.8 355.0,141.8 354.6,140.5 351.3,138.6 351.3,137.9 349.5,136.7 346.8,135.1 345.2,134.0 342.8,132.5 340.7,131.2 338.7,129.9 336.6,128.9 334.0,127.2 334.0,124.8 337.8,123.2 340.5,122.5 342.9,120.9 342.9,119.9 347.1,118.6 346.2,117.2 346.1,114.6Z" fill="#c6e5c6"/>
<path d="M364.2,110.4 366.4,109.7 368.5,110.2 367.6,112.0 368.5,113.8 366.7,115.1 369.3,116.9 369.3,118.1 367.2,119.5 365.8,122.1 365.0,118.8 362.3,115.9 363.7,113.4Z" fill="#c6e5c6"/>
<path d="M369.3,116.9 372.3,117.4 376.0,118.5 376.9,120.1 379.3,121.5 382.5,122.0 384.2,120.8 384.4,118.3 387.7,117.4 390.0,117.5 393.3,119.7 392.8,122.5 392.7,124.8 392.9,127.3 392.9,129.9 392.8,131.9 393.0,133.7 393.0,136.5 393.0,140.0 391.2,140.0 391.2,140.9 389.2,139.9 386.7,138.6 385.3,137.9 383.3,136.8 380.6,135.7 379.4,134.9 377.2,134.0 375.5,134.8 374.1,135.4 370.1,133.9 366.7,131.6 366.2,128.6 366.5,126.9 366.2,125.1 365.8,122.1 367.2,119.5 369.3,118.1Z" fill="#c6e5c6"/>
<path d="M393.3,119.7 397.3,120.4 400.0,120.9 403.5,119.9 405.7,120.4 409.2,120.2 410.3,123.4 409.2,126.0 407.8,125.1 406.2,122.5 406.2,123.4 408.2,126.9 408.6,129.6 410.7,131.3 411.3,133.0 413.8,136.5 411.4,136.5 409.0,136.5 407.0,136.6 405.1,136.4 401.7,136.6 399.5,136.4 397.3,136.5 395.7,136.5 393.0,136.5 393.0,133.7 392.8,131.9 392.9,129.9 392.9,127.3 392.7,124.8 392.8,122.5Z" fill="#5aab5a"/>
<path d="M393.0,136.5 395.7,136.5 397.3,136.5 399.5,136.4 401.7,136.6 405.1,136.4 407.0,136.6 409.0,136.5 411.4,136.5 413.8,136.5 414.5,138.8 414.5,141.8 416.8,143.5 414.7,145.2 413.9,147.3 413.1,150.0 412.6,152.9 410.6,153.6 408.9,156.1 408.7,158.4 408.9,159.9 407.0,161.4 409.6,163.3 411.0,165.6 412.0,166.9 408.7,167.6 407.8,168.4 403.5,168.5 403.1,168.9 400.8,167.3 397.2,166.1 395.4,163.4 393.3,161.2 391.2,159.8 390.3,159.6 389.3,155.9 387.7,152.8 388.6,150.3 389.5,147.5 391.2,147.5 391.3,145.9 391.2,142.9 391.2,140.9 391.2,140.0 393.0,140.0Z" fill="#c6e5c6"/>
<path d="M416.8,143.5 418.7,146.2 418.7,148.6 421.3,149.6 423.7,150.9 424.6,152.8 423.4,153.1 420.6,150.3 417.5,149.4 415.5,148.9 413.1,150.0 413.9,147.3 414.7,145.2Z" fill="#e3f3e3"/>
<path d="M424.6,152.8 425.0,154.9 424.1,155.8 422.4,155.8 423.4,153.1Z" fill="#e3f3e3"/>
<path d="M413.1,150.0 415.5,148.9 417.5,149.4 420.6,150.3 423.4,153.1 422.4,155.8 424.1,155.8 424.5,158.4 426.2,159.2 428.2,159.9 431.5,161.0 433.2,161.0 431.5,162.7 429.7,164.3 428.0,166.2 425.3,166.4 422.7,167.6 422.5,168.1 418.3,169.1 415.7,168.7 412.2,167.2 412.0,166.9 411.0,165.6 409.6,163.3 407.0,161.4 408.9,159.9 408.7,158.4 408.9,156.1 410.6,153.6 412.6,152.9Z" fill="#c6e5c6"/>
<path d="M424.1,155.8 425.0,154.9 427.1,156.8 429.4,155.4 431.5,155.6 435.0,155.2 438.8,154.2 438.6,156.8 437.5,158.8 436.2,161.0 435.0,163.6 433.5,165.1 432.3,168.0 430.1,169.1 428.0,171.7 426.6,174.4 423.6,176.6 422.0,178.0 421.0,175.0 420.9,173.2 421.0,170.1 422.5,168.1 422.7,167.6 425.3,166.4 428.0,166.2 429.7,164.3 431.5,162.7 433.2,161.0 431.5,161.0 428.2,159.9 426.2,159.2 424.5,158.4Z" fill="#f3f9f3"/>
<path d="M422.0,178.0 419.6,179.7 417.8,183.2 415.2,181.1 415.0,180.2 413.5,179.4 411.2,178.0 408.7,176.8 408.7,174.5 410.5,172.0 409.4,169.4 408.7,167.6 412.0,166.9 412.2,167.2 415.7,168.7 418.3,169.1 422.5,168.1 421.0,170.1 420.9,173.2 421.0,175.0Z" fill="#c6e5c6"/>
<path d="M403.1,168.9 403.5,168.5 407.8,168.4 408.7,167.6 409.4,169.4 410.5,172.0 408.7,174.5 408.7,176.8 406.2,176.8 402.6,176.8 401.0,177.4 401.0,175.9 401.5,173.6 404.0,171.1Z" fill="#c6e5c6"/>
<path d="M408.7,176.8 411.2,178.0 413.5,179.4 415.0,180.2 415.2,181.1 417.8,183.2 417.1,186.4 418.3,187.2 418.0,189.9 419.9,193.4 417.4,194.1 415.7,194.8 413.8,194.9 410.5,195.3 409.8,195.3 408.7,191.6 406.8,191.4 403.5,190.1 403.1,189.5 400.7,186.4 400.8,182.9 402.6,181.1 403.1,179.2 402.6,176.8 406.2,176.8Z" fill="#c6e5c6"/>
<path d="M400.0,177.6 401.0,177.4 402.6,176.8 403.1,179.2 401.5,179.7 400.0,179.7Z" fill="#e3f3e3"/>
<path d="M400.0,179.7 401.5,179.7 403.1,179.2 402.6,181.1 400.8,182.9 400.3,181.1Z" fill="#e3f3e3"/>
<path d="M370.6,185.1 372.0,183.1 374.4,183.6 376.0,182.5 377.6,178.9 380.2,175.9 380.4,173.6 380.7,171.5 381.8,168.9 381.8,167.5 383.3,166.1 385.8,166.8 388.4,167.8 389.3,166.6 392.6,166.2 394.6,166.2 397.2,166.1 400.8,167.3 403.1,168.9 404.0,171.1 401.5,173.6 401.0,175.9 401.0,177.4 400.0,177.6 400.0,179.7 400.3,181.1 400.8,182.9 400.7,186.4 403.1,189.5 399.8,189.9 398.9,191.3 399.2,193.4 398.9,195.6 400.0,196.7 401.4,196.4 401.4,198.4 398.2,196.7 396.8,195.3 393.5,194.6 391.9,194.9 391.2,194.1 388.1,194.6 387.4,191.6 387.4,187.8 383.3,187.2 382.5,189.0 380.0,189.2 378.2,185.3 375.4,185.4 372.0,185.3Z" fill="#c6e5c6"/>
<path d="M368.6,181.8 370.2,183.8 371.6,182.7 372.0,183.1 374.4,183.6 376.0,182.5 377.6,178.9 380.2,175.9 380.4,173.6 380.7,171.5 381.8,168.9 378.4,168.9 377.6,171.1 377.2,172.0 374.6,171.1 372.5,171.1 372.5,172.7 374.6,172.6 373.5,174.6 374.6,176.1 374.4,178.3 373.9,179.4 371.1,179.0 369.5,179.0Z" fill="#e3f3e3"/>
<path d="M368.6,181.8 369.5,179.0 371.1,179.0 373.9,179.4 374.4,178.3 374.6,176.1 373.5,174.6 374.6,172.6 372.5,172.7 372.5,171.1 369.0,171.1 369.0,173.2 366.4,173.2 365.5,174.1 365.5,175.7 364.6,176.2 366.0,179.2Z" fill="#e3f3e3"/>
<path d="M366.4,173.2 369.0,173.2 369.0,171.1 366.4,171.0ZM364.1,168.5 364.8,168.5 364.4,169.2Z" fill="#f3f9f3"/>
<path d="M360.6,174.3 360.9,174.5 360.6,174.8ZM362.0,172.0 362.3,172.2 362.2,172.4Z" fill="#f3f9f3"/>
<path d="M366.4,171.0 369.0,171.1 372.5,171.1 374.6,171.1 377.2,172.0 377.6,171.1 375.6,168.4 374.6,165.7 374.8,164.1 376.3,161.9 375.1,160.4 373.4,157.9 376.5,157.5 375.5,155.8 375.3,153.6 374.1,152.6 374.6,152.2 373.0,154.9 371.6,158.6 370.2,161.9 368.8,163.6 367.1,162.8 365.5,163.8 364.1,166.6 366.2,168.2Z" fill="#c6e5c6"/>
<path d="M376.3,161.9 378.6,161.7 380.3,160.6 382.5,159.2 386.0,157.9 389.3,155.9 390.3,159.6 391.2,159.8 393.3,161.2 395.4,163.4 397.2,166.1 394.6,166.2 392.6,166.2 389.3,166.6 388.4,167.8 385.8,166.8 383.3,166.1 381.8,167.5 381.8,168.9 378.4,168.9 377.6,171.1 375.6,168.4 374.6,165.7 374.8,164.1Z" fill="#f3f9f3"/>
<path d="M374.6,152.2 373.0,151.0 372.8,149.6 374.7,147.4 376.3,145.4 376.4,142.5 376.3,140.0 377.0,139.3 376.3,137.2 375.5,134.8 377.2,134.0 379.4,134.9 380.6,135.7 383.3,136.8 385.3,137.9 386.7,138.6 389.2,139.9 391.2,140.9 391.2,142.9 391.3,145.9 391.2,147.5 389.5,147.5 388.6,150.3 387.7,152.8 389.3,155.9 386.0,157.9 382.5,159.2 380.3,160.6 378.6,161.7 376.3,161.9 375.1,160.4 373.4,157.9 376.5,157.5 375.5,155.8 375.3,153.6 374.1,152.6Z" fill="#f3f9f3"/>
<path d="M349.6,148.9 351.5,148.2 355.3,148.1 356.6,145.9 356.6,141.6 359.4,140.9 362.3,138.4 364.8,137.1 365.8,136.5 368.4,134.8 370.1,133.9 374.1,135.4 375.5,134.8 376.3,137.2 377.0,139.3 376.3,140.0 376.4,142.5 376.3,145.4 374.7,147.4 372.8,149.6 373.0,151.0 371.1,152.1 367.9,151.6 365.0,152.6 361.5,152.2 358.0,151.0 356.2,151.4 355.5,154.5 354.1,153.5 353.4,154.2 351.0,151.6Z" fill="#f3f9f3"/>
<path d="M327.9,149.1 329.1,147.7 330.5,148.1 332.9,147.9 336.8,147.8 339.4,147.9 339.9,146.5 339.5,144.0 339.2,141.4 338.8,138.4 338.5,136.3 338.1,134.1 337.7,131.2 340.7,131.2 342.8,132.5 345.2,134.0 346.8,135.1 349.5,136.7 351.3,137.9 351.3,138.6 354.6,140.5 355.0,141.8 356.6,141.6 356.6,145.9 355.3,148.1 351.5,148.2 349.6,148.9 348.0,148.6 345.7,150.1 344.0,151.0 341.7,151.9 341.5,153.6 339.9,154.4 339.6,156.8 338.4,156.4 335.2,157.1 334.7,155.8 333.5,153.3 331.2,153.6 329.2,153.6 329.2,152.2Z" fill="#e3f3e3"/>
<path d="M320.3,146.8 323.8,145.9 325.6,146.8 327.9,149.1 329.2,152.2 329.2,153.3 325.2,152.9 322.1,152.9 320.0,153.4 319.8,152.2 323.0,151.7 325.1,151.9 325.1,151.4 323.0,151.2 319.8,151.9 320.3,151.2 318.6,149.3Z" fill="#c6e5c6"/>
<path d="M319.8,151.9 323.0,151.2 325.1,151.4 325.1,151.9 323.0,151.7 319.8,152.2Z" fill="#c6e5c6"/>
<path d="M320.0,153.4 322.1,152.9 325.2,152.9 325.2,154.5 323.0,155.8 321.2,154.4Z" fill="#e3f3e3"/>
<path d="M323.0,155.8 325.2,154.5 325.2,152.9 329.2,153.3 329.2,153.6 331.2,153.6 333.5,153.3 334.7,155.8 335.2,157.1 335.7,160.3 334.3,161.7 332.8,162.1 332.6,160.3 331.2,160.1 330.5,158.7 329.6,157.5 327.3,157.7 325.9,159.2 323.8,157.0Z" fill="#e3f3e3"/>
<path d="M325.9,159.2 327.3,157.7 329.6,157.5 330.5,158.7 331.2,160.1 330.7,161.4 329.1,162.9 326.6,161.2Z" fill="#e3f3e3"/>
<path d="M329.1,162.9 330.7,161.4 331.2,160.1 332.6,160.3 332.8,162.1 334.3,161.7 334.7,163.8 336.1,164.9 336.1,167.4 333.1,166.1 330.9,165.2Z" fill="#f3f9f3"/>
<path d="M336.1,167.4 336.1,164.9 334.7,163.8 334.3,161.7 335.7,160.3 335.2,157.1 338.4,156.4 339.6,156.8 341.0,158.0 344.5,158.4 344.3,161.2 343.6,163.6 344.3,166.1 341.3,165.9 338.7,166.8Z" fill="#c6e5c6"/>
<path d="M339.6,156.8 339.9,154.4 341.5,153.6 341.7,151.9 344.0,151.0 345.7,150.1 348.0,148.6 349.6,148.9 351.0,151.6 353.4,154.2 351.7,155.1 350.8,155.8 348.9,155.6 345.9,155.6 344.3,155.8 344.5,158.4 341.0,158.0Z" fill="#e3f3e3"/>
<path d="M344.3,166.1 343.6,163.6 344.3,161.2 344.5,158.4 344.3,155.8 345.9,155.6 348.9,155.6 350.1,156.6 350.1,160.1 350.2,162.8 351.3,164.3 348.3,165.7 345.7,166.7Z" fill="#c6e5c6"/>
<path d="M351.3,164.3 350.2,162.8 350.1,160.1 350.1,156.6 348.9,155.6 350.8,155.8 350.6,157.5 352.0,159.2 351.9,162.4 352.0,164.1Z" fill="#c6e5c6"/>
<path d="M352.0,164.1 351.9,162.4 352.0,159.2 350.6,157.5 350.8,155.8 351.7,155.1 353.4,154.2 354.1,153.5 355.5,154.5 355.9,156.6 354.1,159.2 354.0,161.4 353.9,163.8Z" fill="#c6e5c6"/>
<path d="M353.9,163.8 354.0,161.4 354.1,159.2 355.9,156.6 355.5,154.5 356.2,151.4 358.0,151.0 361.5,152.2 365.0,152.6 367.9,151.6 371.1,152.1 373.0,151.0 374.6,152.2 374.1,152.6 373.0,154.9 371.6,158.6 370.2,161.9 368.8,163.6 367.1,162.8 365.5,163.8 364.1,166.6 361.5,167.3 359.7,167.5 358.0,165.2 356.9,164.0Z" fill="#98d098"/>
<path d="M370.7,185.7 372.0,185.3 375.4,185.4 378.2,185.3 380.0,189.2 382.5,189.0 383.3,187.2 387.4,187.8 387.4,191.6 388.1,194.6 391.2,194.1 391.2,197.8 387.7,197.8 387.8,201.1 387.7,203.4 390.2,205.8 386.7,206.3 384.4,206.0 381.6,205.4 379.7,205.5 376.0,205.3 373.7,205.4 369.9,205.2 369.9,202.6 371.1,198.4 372.5,196.1 373.4,194.2 372.0,190.8 372.1,188.0ZM370.2,183.8 371.6,182.7 372.0,183.1 370.6,185.1Z" fill="#f3f9f3"/>
<path d="M387.7,197.8 391.2,197.8 391.2,194.1 391.9,194.9 393.5,194.6 396.8,195.3 398.2,196.7 401.4,198.4 401.4,196.4 400.0,196.7 398.9,195.6 399.2,193.4 398.9,191.3 399.8,189.9 403.1,189.5 403.5,190.1 406.8,191.4 407.5,193.9 407.0,196.9 406.4,198.8 407.3,199.5 404.5,200.1 402.1,200.9 402.4,202.3 400.0,202.8 398.1,204.8 396.5,206.3 393.5,206.1 390.2,205.8 387.7,203.4 387.8,201.1Z" fill="#c6e5c6"/>
<path d="M406.8,191.4 408.7,191.6 409.8,195.3 409.4,196.4 409.8,198.4 412.0,201.1 411.9,203.2 411.0,204.9 409.4,203.5 409.6,200.6 407.3,199.5 406.4,198.8 407.0,196.9 407.5,193.9Z" fill="#c6e5c6"/>
<path d="M419.9,193.4 420.2,197.2 420.6,200.7 418.0,204.2 416.5,204.9 413.8,206.3 412.1,207.1 410.5,209.6 411.2,213.1 411.3,217.0 408.8,218.8 407.0,219.4 406.8,222.0 405.4,222.0 405.0,220.1 405.2,217.5 404.0,214.2 405.9,212.3 407.0,209.6 406.4,207.9 407.0,205.3 406.8,204.2 404.5,203.2 402.4,202.3 402.1,200.9 404.5,200.1 407.3,199.5 409.6,200.6 409.4,203.5 411.0,204.9 411.9,203.2 412.0,201.1 409.8,198.4 409.4,196.4 409.8,195.3 410.5,195.3 413.8,194.9 415.7,194.8 417.4,194.1Z" fill="#c6e5c6"/>
<path d="M393.5,206.1 396.5,206.3 398.1,204.8 400.0,202.8 402.4,202.3 404.5,203.2 406.8,204.2 407.0,205.3 406.4,207.9 407.0,209.6 405.9,212.3 404.0,214.2 400.7,213.9 398.2,212.8 397.7,210.9 395.1,209.3Z" fill="#c6e5c6"/>
<path d="M386.0,207.0 385.9,210.9 386.0,213.5 384.2,213.5 384.3,215.5 384.2,218.4 385.6,222.1 388.9,219.6 392.4,220.1 394.0,219.8 396.3,217.5 396.6,216.3 398.2,215.2 400.7,213.9 398.2,212.8 397.7,210.9 395.1,209.3 393.5,206.1 391.7,206.5 390.0,206.5Z" fill="#c6e5c6"/>
<path d="M369.9,205.2 373.7,205.4 376.0,205.3 379.7,205.5 381.6,205.4 384.4,206.0 386.7,206.3 390.2,205.8 393.5,206.1 391.7,206.5 390.0,206.5 386.0,207.0 385.9,210.9 386.0,213.5 384.2,213.5 384.3,215.5 384.2,218.4 384.3,222.0 384.2,224.7 381.8,224.9 379.7,225.2 378.1,225.1 375.6,221.7 376.0,220.0 375.5,217.8 374.6,215.1 372.5,211.4 370.2,208.8 369.9,206.5Z" fill="#c6e5c6"/>
<path d="M378.1,225.1 379.7,225.2 381.8,224.9 384.2,224.7 384.3,222.0 384.2,218.4 385.6,222.1 388.9,219.6 392.4,220.1 394.0,219.8 396.3,217.5 396.6,216.3 398.2,215.2 400.7,213.9 404.0,214.2 405.2,217.5 405.0,220.1 405.4,222.0 406.8,222.0 405.9,224.9 404.0,226.4 401.7,229.8 398.6,232.4 395.6,234.1 394.0,234.5 391.9,234.8 388.6,234.7 385.9,235.8 384.2,235.9 381.4,235.0 381.2,232.2 381.1,230.5 379.3,227.5Z" fill="#5aab5a"/>
<path d="M396.5,226.8 399.2,225.1 400.7,226.6 398.6,228.6Z" fill="#f3f9f3"/>
<path d="M403.5,220.5 405.0,220.3 405.4,222.0 404.0,222.8Z" fill="#c6e5c6"/>
<path d="M435.5,196.0 435.6,199.0 437.6,202.1 436.2,203.0 435.7,206.5 435.3,209.7 433.9,212.6 432.2,215.5 431.8,218.6 428.3,219.8 427.0,218.1 425.7,216.1 425.0,213.1 426.9,209.6 426.0,206.6 426.2,204.8 428.0,203.0 430.2,202.5 431.7,199.9 433.2,198.8Z" fill="#e3f3e3"/>
<path d="M449.5,210.0 450.4,210.4 449.8,210.9ZM446.0,211.6 446.9,211.9 446.3,212.4ZM424.8,194.9 425.3,195.6 425.0,195.8ZM428.0,197.2 428.5,197.6 428.1,197.8ZM446.2,183.1 446.5,183.2 446.3,183.4Z" fill="#e3f3e3"/>
<path d="M307.7,148.4 308.2,148.6 307.9,148.9ZM305.1,145.1 305.5,145.1 305.3,145.4ZM306.5,148.9 306.7,148.8 306.6,149.1Z" fill="#e3f3e3"/>
</g></svg>
  <svg class="abs" style="left:0;top:60px" width="80" height="150" viewBox="261 141 80 150">
    <g fill="#003f00">
      <rect x="287" y="159.5" width="18" height="53.5" rx="9" ry="9"/>
      <rect x="278" y="176.5" width="36" height="18.5" rx="9.2" ry="9.2"/>
      <rect x="287" y="218" width="18" height="54" rx="9" ry="9"/>
    </g>
    <g fill="#fff">
      <path d="M295.8 164.3 L301 172.2 L290.6 172.2 Z"/>
      <path d="M295.8 208.6 L301 200.6 L290.6 200.6 Z"/>
      <path d="M281.8 186 L290.4 181.5 L290.4 190.6 Z"/>
      <path d="M310 186 L301.4 181.5 L301.4 190.6 Z"/>
      <rect x="290.8" y="226.7" width="10.2" height="2.2"/>
      <rect x="294.8" y="222.7" width="2.2" height="10.2"/>
      <rect x="290.8" y="261" width="10.2" height="2.2"/>
    </g>
    <g fill="none" stroke="#d2cffa" stroke-width="0.8">
      <circle cx="296.3" cy="244.3" r="8.2" fill="#5f68ae"/>
      <ellipse cx="296.3" cy="244.3" rx="4.2" ry="8.2"/>
      <path d="M296.3 236.1 V252.5 M288.1 244.3 H304.5 M289.3 240.2 Q296.3 242.6 303.3 240.2 M289.3 248.4 Q296.3 246 303.3 248.4"/>
    </g>
  </svg>

  <div class="abs" style="left:9px;top:400px;width:150px;height:20px;background:linear-gradient(to right,#fff 0,#d6ecd6 20%,#84c484 50%,#2a862a 76%,#004f00 100%)"></div>
  <div class="abs" style="left:9px;top:401px;font-size:12px;line-height:13px;color:#111">0</div>
  <div class="abs" style="left:98.5px;top:401px;font-size:12px;line-height:13px;color:#111">75,012</div>
  <div class="hline" style="top:430px"></div>
  <div class="abs b" style="left:19px;top:441px;font-size:14px;line-height:16px">Report View by Selection</div>
  <div class="abs b blue" style="left:622px;top:441px;font-size:14px;line-height:16px">Customize</div>
  <div class="abs" style="left:0;top:466px;width:714px;height:1px;background:#d6d6d6"></div><div class="abs" style="left:0;top:467px;width:709px;height:38px;background:#f0f0f0"></div>
  <div class="th" style="left:0;width:60px;top:470px">Total:<br><span style="padding-right:10px">9019</span></div>
  <div class="th" style="left:70px;width:120px;top:478px">Institutions</div>
  <div class="th" style="left:200px;width:140px;top:478px">Countries/Regions</div>
  <div class="th" style="left:340px;width:122px;top:470px">Web of Science<br><span style="padding-right:8px">Documents</span></div>
  <div class="th" style="left:491px;top:478px;color:#466ea5;text-align:left">Cites</div>
  <svg class="abs" style="left:528px;top:483px" width="9" height="6" viewBox="0 0 9 6"><path d="M0.5 0.5 L8.5 0.5 L4.5 5 Z" fill="#5b86c4"/></svg>
  <div class="th" style="left:570px;width:114px;top:478px">Cites/Paper</div>

  <div class="row" style="top:521px;height:26px"></div>
  <div class="row" style="top:547px;height:34px"></div>
  <div class="row" style="top:581px;height:47px"></div>
  <div class="row" style="top:628px;height:47px"></div>

  <div class="c num" style="left:0;width:55px;top:527px">4043</div>
  <div class="c lnk" style="left:78px;top:527px">NOFIMA</div>
  <div class="c lnk" style="left:217px;top:527px">NORWAY</div>
  <div class="c num" style="left:380px;width:79px;top:527px">1,572</div>
  <div class="c num" style="left:490px;width:79px;top:527px">34,392</div>
  <div class="c num" style="left:606px;width:79px;top:527px">21.88</div>

  <div class="c num" style="left:0;width:55px;top:557px">4044</div>
  <div class="c lnk" style="left:78px;top:550px">UNIVERSITY OF<br>WEST ATTICA</div>
  <div class="c lnk" style="left:217px;top:557px">GREECE</div>
  <div class="c num" style="left:380px;width:79px;top:557px">2,698</div>
  <div class="c num" style="left:490px;width:79px;top:557px">34,387</div>
  <div class="c num" style="left:606px;width:79px;top:557px">12.75</div>

  <div class="c num" style="left:0;width:55px;top:597px">4045</div>
  <div class="c lnk" style="left:78px;top:584px">TIANJIN<br>CHENGJIAN<br>UNIVERSITY</div>
  <div class="c lnk" style="left:217px;top:591px">CHINA<br>MAINLAND</div>
  <div class="c num" style="left:380px;width:79px;top:597px">2,503</div>
  <div class="c num" style="left:490px;width:79px;top:597px">34,365</div>
  <div class="c num" style="left:606px;width:79px;top:597px">13.73</div>

  <div class="c num" style="left:0;width:55px;top:644px">4046</div>
  <div class="c lnk" style="left:78px;top:631px">KING KHALID<br>UNIVERSITY<br>HOSPITAL</div>
  <div class="c lnk" style="left:217px;top:644px">SAUDI ARABIA</div>
  <div class="c num" style="left:380px;width:79px;top:644px">740</div>
  <div class="c num" style="left:490px;width:79px;top:644px">34,351</div>
  <div class="c num" style="left:606px;width:79px;top:644px">46.42</div>

  <div class="abs" style="left:692px;top:521px;width:17px;height:154px;background:#f1f1f1"></div>
  <svg class="abs" style="left:696.5px;top:527.5px" width="8" height="5" viewBox="0 0 8 5"><path d="M0 4.7 L4 0.3 L8 4.7 Z" fill="#505050"/></svg>
  <div class="abs" style="left:694.5px;top:658px;width:12.5px;height:17px;background:#c1c1c1"></div>
</div>
<div class="red" style="left:248px;top:540px;width:70px;height:55px"></div>
<div class="red" style="left:270px;top:658px;width:373px;height:55px"></div>
</body></html>
